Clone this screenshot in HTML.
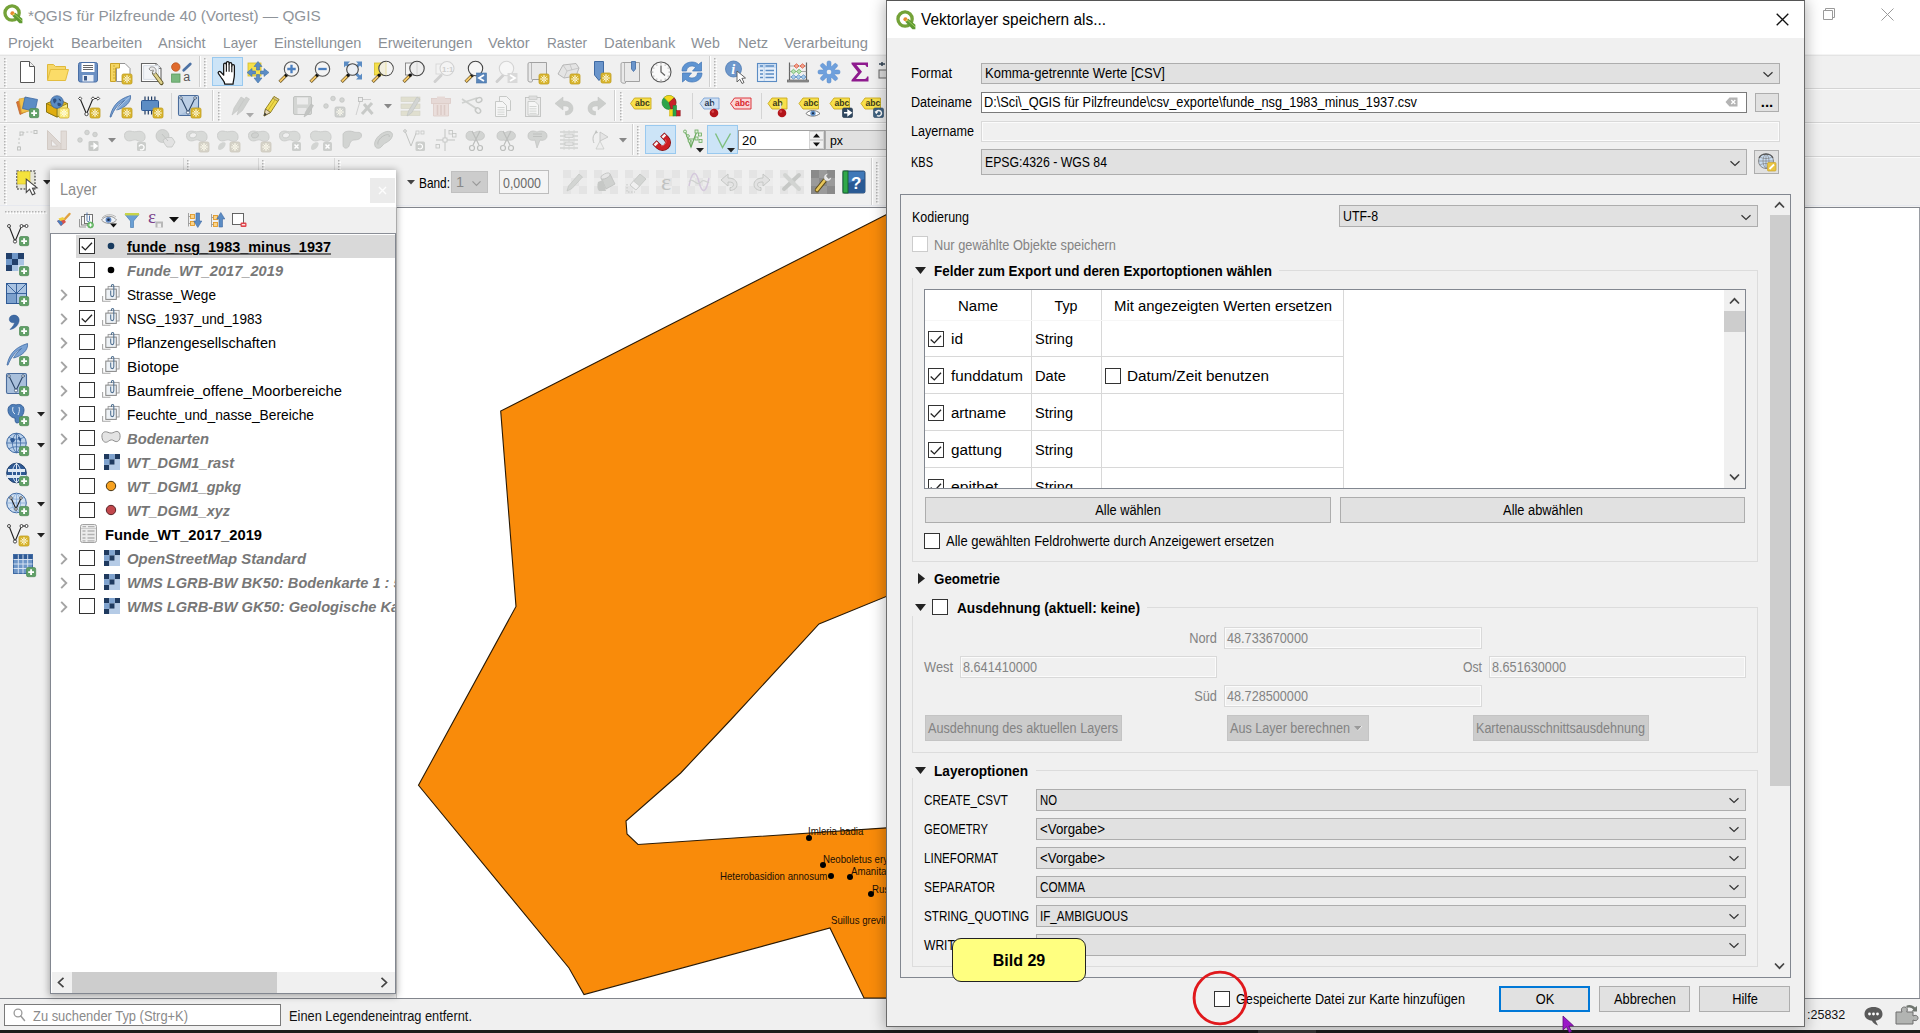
<!DOCTYPE html>
<html lang="de"><head><meta charset="utf-8"><title>QGIS</title>
<style>
*{box-sizing:border-box;margin:0;padding:0}
html,body{width:1920px;height:1033px;overflow:hidden;background:#f0f0f0}
body{position:relative;font-family:"Liberation Sans",sans-serif;font-size:13px;color:#000}
.a{position:absolute}
.t{position:absolute;white-space:pre;line-height:1}
.seg{font-size:15px}
.b{font-weight:bold}
.i{font-style:italic}
.g{color:#838383}
.combo{position:absolute;background:#e1e1e1;border:1px solid #adadad}
.inp{position:absolute;background:#fff;border:1px solid #7a7a7a}
.dinp{position:absolute;background:#f0f0f0;border:1px solid #d9d9d9;box-shadow:inset 0 0 0 1px #fbfbfb}
.btn{position:absolute;background:#e1e1e1;border:1px solid #adadad;text-align:center}
.dbtn{position:absolute;background:#cccccc;border:1px solid #c4c4c4;color:#838383}
.cb{position:absolute;width:16px;height:16px;background:#fff;border:1px solid #333}
.cbd{position:absolute;width:16px;height:16px;background:#fff;border:1px solid #ccc}
.ln{position:absolute;background:#dcdcdc}
svg{position:absolute;overflow:visible}
</style></head>
<body>
<div class="a" style="left:0px;top:0px;width:1920px;height:30px;background:#fff"></div>
<svg style="left:2.5px;top:3.5px" width="19.5" height="19.5" viewBox="0 0 20 20"><circle cx="9.300" cy="9.300" r="7.300" fill="#fff" stroke="#74a238" stroke-width="3.400"/><path d="M9.500 12L12.600 8.900L19.900 15.200V19.800H16.900Z" fill="#5f9a33"/><path d="M11.600 10.200L19.500 17.300" stroke="#a3d05c" stroke-width="0.900" fill="none"/><circle cx="9.700" cy="9.500" r="2.100" fill="#e58a2e"/><circle cx="10.900" cy="10.700" r="0.900" fill="#eed060"/></svg>
<div class="t" style="left:27.8px;top:15px;font-size:15px;transform-origin:0 50%;transform:translateY(-50%) scaleX(1.0206);color:#8f949a;">*QGIS für Pilzfreunde 40 (Vortest) — QGIS</div>
<svg style="left:1822px;top:7px" width="14" height="14" viewBox="0 0 14 14"><path d="M3.5 3.5V1.5H12.5V10.5H10.5M1.5 3.5H10.5V12.5H1.5Z" fill="none" stroke="#9a9a9a" stroke-width="1"/></svg>
<svg style="left:1881px;top:8px" width="13" height="13" viewBox="0 0 13 13"><path d="M0.5 0.5L12.5 12.5M12.5 0.5L0.5 12.5" fill="none" stroke="#9a9a9a" stroke-width="1"/></svg>
<div class="a" style="left:0px;top:30px;width:1920px;height:24px;background:#fff"></div>
<div class="t" style="left:8.3px;top:41.8px;font-size:15px;transform-origin:0 50%;transform:translateY(-50%) scaleX(0.9746);color:#8b9096;">Projekt</div>
<div class="t" style="left:70.5px;top:41.8px;font-size:15px;transform-origin:0 50%;transform:translateY(-50%) scaleX(0.9814);color:#8b9096;">Bearbeiten</div>
<div class="t" style="left:158.3px;top:41.8px;font-size:15px;transform-origin:0 50%;transform:translateY(-50%) scaleX(0.9657);color:#8b9096;">Ansicht</div>
<div class="t" style="left:222.5px;top:41.8px;font-size:15px;transform-origin:0 50%;transform:translateY(-50%) scaleX(0.9141);color:#8b9096;">Layer</div>
<div class="t" style="left:273.5px;top:41.8px;font-size:15px;transform-origin:0 50%;transform:translateY(-50%) scaleX(0.9693);color:#8b9096;">Einstellungen</div>
<div class="t" style="left:377.5px;top:41.8px;font-size:15px;transform-origin:0 50%;transform:translateY(-50%) scaleX(0.9750);color:#8b9096;">Erweiterungen</div>
<div class="t" style="left:488.3px;top:41.8px;font-size:15px;transform-origin:0 50%;transform:translateY(-50%) scaleX(0.9806);color:#8b9096;">Vektor</div>
<div class="t" style="left:546.7px;top:41.8px;font-size:15px;transform-origin:0 50%;transform:translateY(-50%) scaleX(0.9054);color:#8b9096;">Raster</div>
<div class="t" style="left:603.7px;top:41.8px;font-size:15px;transform-origin:0 50%;transform:translateY(-50%) scaleX(0.9828);color:#8b9096;">Datenbank</div>
<div class="t" style="left:691.4px;top:41.8px;font-size:15px;transform-origin:0 50%;transform:translateY(-50%) scaleX(0.9421);color:#8b9096;">Web</div>
<div class="t" style="left:737.5px;top:41.8px;font-size:15px;transform-origin:0 50%;transform:translateY(-50%) scaleX(0.9792);color:#8b9096;">Netz</div>
<div class="t" style="left:784.3px;top:41.8px;font-size:15px;transform-origin:0 50%;transform:translateY(-50%) scaleX(0.9875);color:#8b9096;">Verarbeitung</div>
<div class="a" style="left:0px;top:54px;width:1920px;height:1px;background:#f4f4f4"></div>
<div class="a" style="left:0px;top:55px;width:1920px;height:1px;background:#e4e4e4"></div>
<div class="a" style="left:0px;top:88px;width:1920px;height:1px;background:#d4d4d4"></div>
<div class="a" style="left:0px;top:89px;width:1920px;height:1px;background:#fafafa"></div>
<div class="a" style="left:0px;top:122px;width:1920px;height:1px;background:#d4d4d4"></div>
<div class="a" style="left:0px;top:123px;width:1920px;height:1px;background:#fafafa"></div>
<div class="a" style="left:0px;top:156px;width:1920px;height:1px;background:#d4d4d4"></div>
<div class="a" style="left:0px;top:157px;width:1920px;height:1px;background:#fafafa"></div>
<div class="a" style="left:0px;top:205px;width:1920px;height:1px;background:#e6e8ee"></div>
<svg style="left:4px;top:58px" width="4" height="28"><rect x="0" y="0" width="1.5" height="1.5" fill="#b4b4b4"/><rect x="1.5" y="1.5" width="1.5" height="1.5" fill="#fff"/><rect x="0" y="3" width="1.5" height="1.5" fill="#b4b4b4"/><rect x="1.5" y="4.5" width="1.5" height="1.5" fill="#fff"/><rect x="0" y="6" width="1.5" height="1.5" fill="#b4b4b4"/><rect x="1.5" y="7.5" width="1.5" height="1.5" fill="#fff"/><rect x="0" y="9" width="1.5" height="1.5" fill="#b4b4b4"/><rect x="1.5" y="10.5" width="1.5" height="1.5" fill="#fff"/><rect x="0" y="12" width="1.5" height="1.5" fill="#b4b4b4"/><rect x="1.5" y="13.5" width="1.5" height="1.5" fill="#fff"/><rect x="0" y="15" width="1.5" height="1.5" fill="#b4b4b4"/><rect x="1.5" y="16.5" width="1.5" height="1.5" fill="#fff"/><rect x="0" y="18" width="1.5" height="1.5" fill="#b4b4b4"/><rect x="1.5" y="19.5" width="1.5" height="1.5" fill="#fff"/><rect x="0" y="21" width="1.5" height="1.5" fill="#b4b4b4"/><rect x="1.5" y="22.5" width="1.5" height="1.5" fill="#fff"/><rect x="0" y="24" width="1.5" height="1.5" fill="#b4b4b4"/><rect x="1.5" y="25.5" width="1.5" height="1.5" fill="#fff"/><rect x="0" y="27" width="1.5" height="1.5" fill="#b4b4b4"/><rect x="1.5" y="28.5" width="1.5" height="1.5" fill="#fff"/></svg>
<svg style="left:15.0px;top:60.0px" width="24" height="24" viewBox="0 0 24 24"><path d="M5.500 1.500H14.500L19.500 6.500V22.500H5.500Z" fill="#fff" stroke="#555" stroke-width="1"/><path d="M14.500 1.500V6.500H19.500" fill="#eee" stroke="#555" stroke-width="1"/></svg>
<svg style="left:45.0px;top:60.0px" width="24" height="24" viewBox="0 0 24 24"><path d="M2.5 20V4.5H8.5L10.5 6.5H20.5V9" fill="#f6d768" stroke="#e0b93a" stroke-width="1"/><path d="M2.5 20.5L5.5 9.5H23.5L20.5 20.5Z" fill="#fbdc68" stroke="#e3bd3f" stroke-width="1"/></svg>
<svg style="left:76.0px;top:60.0px" width="24" height="24" viewBox="0 0 24 24"><rect x="2.5" y="2.5" width="19" height="19.5" rx="2" fill="#6a8fc3" stroke="#4a6fa5" stroke-width="1"/><rect x="5.5" y="3" width="13" height="9" fill="#fff"/><path d="M7 5.5H17M7 7.5H17M7 9.5H17" stroke="#555" stroke-width="0.9"/><rect x="6.5" y="15" width="11" height="6.5" fill="#e8eef7"/><rect x="8" y="16" width="3" height="4.5" fill="#3d5a8a"/></svg>
<svg style="left:108.0px;top:60.0px" width="24" height="24" viewBox="0 0 24 24"><path d="M8.5 3.5H17L22 8.5V21.5H8.5Z" fill="#fff" stroke="#888" stroke-width="0.9"/><path d="M2.500 3.5H11.500V8H7.5V21.500H2.500Z" fill="#f5d662" stroke="#c9a227" stroke-width="1"/><path d="M5 6H7M5 9H6.500M5 12H7M5 15H6.500M5 18H7" stroke="#b8962a" stroke-width="0.7"/><rect x="14" y="14" width="10" height="10" rx="1.500" fill="#d9b630" stroke="#bf9c20" stroke-width="0.800"/><path d="M19 15.2V22.8M15.2 19H22.8" stroke="#fffef0" stroke-width="1.150" fill="none"/><path d="M16.4 16.4L21.6 21.6M21.6 16.4L16.4 21.6" stroke="#fffef0" stroke-width="0.900" fill="none"/><circle cx="19" cy="19" r="0.700" fill="#d9b630"/></svg>
<svg style="left:139.0px;top:60.0px" width="24" height="24" viewBox="0 0 24 24"><path d="M2.500 3.500H17L22 8.500V21.500H2.500Z" fill="#fff" stroke="#666" stroke-width="1.100"/><path d="M17 3.500V8.500H22" fill="#f4f4f4" stroke="#666" stroke-width="0.900"/><rect x="4.700" y="5.700" width="15" height="13.600" fill="#f2f4f7" stroke="#cfd6df" stroke-width="0.800"/><path d="M15 13L22.500 23" stroke="#5f5526" stroke-width="4.200" stroke-linecap="round"/><path d="M15.300 13.400L22.300 22.700" stroke="#ded28c" stroke-width="2.600" stroke-linecap="round"/><path d="M11 7.500C13 6.200 16.300 7.200 17 9.800C17.500 11.800 16.500 13.600 14.800 14.300L13.200 12.200C14.300 11.800 14.700 10.900 14.300 10L11.800 10.800L10 9Z" fill="#ececec" stroke="#7d7d7d" stroke-width="0.800"/></svg>
<svg style="left:169.0px;top:60.0px" width="24" height="24" viewBox="0 0 24 24"><circle cx="6.800" cy="7" r="4.200" fill="#e06a2c" stroke="#b9561f" stroke-width="0.800"/><rect x="2.600" y="14" width="8.400" height="8.200" fill="#7ab87e" stroke="#5a9a5e" stroke-width="0.800"/><path d="M14.700 10.200L21.300 3.900" stroke="#4d72a4" stroke-width="2.700" stroke-linecap="round"/><text x="14.300" y="21.200" font-family="Liberation Sans,sans-serif" font-size="12.500" fill="#555">a</text></svg>
<div class="a" style="left:199px;top:56px;width:1px;height:31px;background:#d0d0d0"></div><div class="a" style="left:200px;top:56px;width:1px;height:31px;background:#fff"></div>
<svg style="left:204px;top:58px" width="4" height="28"><rect x="0" y="0" width="1.5" height="1.5" fill="#b4b4b4"/><rect x="1.5" y="1.5" width="1.5" height="1.5" fill="#fff"/><rect x="0" y="3" width="1.5" height="1.5" fill="#b4b4b4"/><rect x="1.5" y="4.5" width="1.5" height="1.5" fill="#fff"/><rect x="0" y="6" width="1.5" height="1.5" fill="#b4b4b4"/><rect x="1.5" y="7.5" width="1.5" height="1.5" fill="#fff"/><rect x="0" y="9" width="1.5" height="1.5" fill="#b4b4b4"/><rect x="1.5" y="10.5" width="1.5" height="1.5" fill="#fff"/><rect x="0" y="12" width="1.5" height="1.5" fill="#b4b4b4"/><rect x="1.5" y="13.5" width="1.5" height="1.5" fill="#fff"/><rect x="0" y="15" width="1.5" height="1.5" fill="#b4b4b4"/><rect x="1.5" y="16.5" width="1.5" height="1.5" fill="#fff"/><rect x="0" y="18" width="1.5" height="1.5" fill="#b4b4b4"/><rect x="1.5" y="19.5" width="1.5" height="1.5" fill="#fff"/><rect x="0" y="21" width="1.5" height="1.5" fill="#b4b4b4"/><rect x="1.5" y="22.5" width="1.5" height="1.5" fill="#fff"/><rect x="0" y="24" width="1.5" height="1.5" fill="#b4b4b4"/><rect x="1.5" y="25.5" width="1.5" height="1.5" fill="#fff"/><rect x="0" y="27" width="1.5" height="1.5" fill="#b4b4b4"/><rect x="1.5" y="28.5" width="1.5" height="1.5" fill="#fff"/></svg>
<div class="a" style="left:212px;top:57px;width:31px;height:29px;background:#cce4f7;border:1px solid #99c9ef"></div>
<svg style="left:216.0px;top:60.0px" width="24" height="24" viewBox="0 0 24 24"><g transform="translate(-1.6 -1.2) scale(1.13)"><path d="M8.200 13.500V5.200C8.200 3.400 10.600 3.400 10.600 5.200V3.800C10.600 2 13 2 13 3.800V4.600C13 2.900 15.400 2.900 15.400 4.600V6.300C15.400 4.800 17.700 4.800 17.700 6.300V14C17.700 18 16.500 19.500 16.500 22.500H9.200C9.200 20.500 7.800 19 6.300 17L3.600 13.200C2.600 11.700 4.400 10.400 5.600 11.700L8.200 14.500Z" fill="#fff" stroke="#111" stroke-width="1.100" stroke-linejoin="round"/><path d="M10.600 5V11.500M13 4.600V11.500M15.400 6.300V11.800" stroke="#111" stroke-width="1" fill="none"/></g></svg>
<svg style="left:246.0px;top:60.0px" width="24" height="24" viewBox="0 0 24 24"><rect x="2" y="3" width="13" height="13" fill="#f5e04a" stroke="#d4bc2a" stroke-width="0.8"/><g fill="#5b8cc4" stroke="#4573a7" stroke-width="0.6"><path d="M12 1.500L16 6.500H13.500V10H10.500V6.500H8Z"/><path d="M12 23L16 18H13.500V14.500H10.500V18H8Z"/><path d="M1 12.500L6 8.500V11H9.500V14H6V16.500Z"/><path d="M23 12.500L18 8.500V11H14.500V14H18V16.500Z"/></g></svg>
<svg style="left:277.0px;top:60.0px" width="24" height="24" viewBox="0 0 24 24"><path d="M2.6 21.8L9.6 14.8" stroke="#5a4a20" stroke-width="3.2" stroke-linecap="butt"/><path d="M2.9 21.5L8 16.4" stroke="#f6c968" stroke-width="2.0" stroke-linecap="butt"/><circle cx="9.3" cy="15.1" r="1.7" fill="#111"/><circle cx="14.5" cy="9" r="7.2" fill="#f4f4f4" stroke="#555" stroke-width="1.1"/><path d="M14.500 4.800V13.200M10.300 9H18.700" stroke="#4b7fc0" stroke-width="2.300"/></svg>
<svg style="left:308.0px;top:60.0px" width="24" height="24" viewBox="0 0 24 24"><path d="M2.6 21.8L9.6 14.8" stroke="#5a4a20" stroke-width="3.2" stroke-linecap="butt"/><path d="M2.9 21.5L8 16.4" stroke="#f6c968" stroke-width="2.0" stroke-linecap="butt"/><circle cx="9.3" cy="15.1" r="1.7" fill="#111"/><circle cx="14.5" cy="9" r="7.2" fill="#f4f4f4" stroke="#555" stroke-width="1.1"/><path d="M10.300 9H18.700" stroke="#4b7fc0" stroke-width="2.300"/></svg>
<svg style="left:339.0px;top:60.0px" width="24" height="24" viewBox="0 0 24 24"><g fill="#5b8cc4"><path d="M5 1.500H11L9 3.500L12 6.500L10 8.500L7 5.500L5 7.500Z"/><path d="M23 1.500H17L19 3.500L16 6.500L18 8.500L21 5.500L23 7.500Z"/><path d="M23 19.500H17L19 17.500L16 14.500L18 12.500L21 15.500L23 13.500Z"/></g><path d="M2.6 21.8L9.6 14.8" stroke="#5a4a20" stroke-width="3.2" stroke-linecap="butt"/><path d="M2.9 21.5L8 16.4" stroke="#f6c968" stroke-width="2.0" stroke-linecap="butt"/><circle cx="9.3" cy="15.1" r="1.7" fill="#111"/><circle cx="13.5" cy="9.5" r="5.8" fill="#eceff3" stroke="#444" stroke-width="1.1"/></svg>
<svg style="left:370.0px;top:60.0px" width="24" height="24" viewBox="0 0 24 24"><rect x="4.500" y="3" width="9" height="12" fill="#f5e04a" stroke="#d4bc2a" stroke-width="0.8"/><path d="M2.6 21.8L9.6 14.8" stroke="#5a4a20" stroke-width="3.2" stroke-linecap="butt"/><path d="M2.9 21.5L8 16.4" stroke="#f6c968" stroke-width="2.0" stroke-linecap="butt"/><circle cx="9.3" cy="15.1" r="1.7" fill="#111"/><circle cx="16" cy="8.5" r="7.2" fill="#f2efdf" stroke="#444" stroke-width="1.1"/><path d="M16 1.800A6.700 6.700 0 0 1 16 15.200Z" fill="#f4f4f4"/><path d="M16 2V15" stroke="#e6d98a" stroke-width="0.8"/></svg>
<svg style="left:401.0px;top:60.0px" width="24" height="24" viewBox="0 0 24 24"><rect x="4.500" y="3" width="9" height="12" fill="#f4f4f4" stroke="#777" stroke-width="0.8"/><path d="M2.6 21.8L9.6 14.8" stroke="#5a4a20" stroke-width="3.2" stroke-linecap="butt"/><path d="M2.9 21.5L8 16.4" stroke="#f6c968" stroke-width="2.0" stroke-linecap="butt"/><circle cx="9.3" cy="15.1" r="1.7" fill="#111"/><circle cx="16" cy="8.5" r="7.2" fill="#eee" stroke="#444" stroke-width="1.1"/><path d="M16 2V15" stroke="#ccc" stroke-width="0.8"/></svg>
<svg style="left:432.0px;top:60.0px" width="24" height="24" viewBox="0 0 24 24"><rect x="4" y="4" width="9" height="10" fill="#f2f2f2" stroke="#d4d4d4" stroke-width="0.8"/><path d="M3 21.500L9 15.500" stroke="#d0d0d0" stroke-width="3" stroke-linecap="round"/><circle cx="15" cy="8.500" r="7" fill="#f4f4f4" stroke="#d2d2d2" stroke-width="1.100"/><text x="10" y="11.500" font-family="Liberation Sans,sans-serif" font-weight="bold" font-size="8" fill="#cfcfcf">1:1</text></svg>
<svg style="left:463.0px;top:60.0px" width="24" height="24" viewBox="0 0 24 24"><path d="M2.6 21.8L9.6 14.8" stroke="#5a4a20" stroke-width="3.2" stroke-linecap="butt"/><path d="M2.9 21.5L8 16.4" stroke="#f6c968" stroke-width="2.0" stroke-linecap="butt"/><circle cx="9.3" cy="15.1" r="1.7" fill="#111"/><circle cx="12.5" cy="8.5" r="7.2" fill="#f6f6f6" stroke="#444" stroke-width="1.1"/><rect x="13.500" y="13" width="10" height="10" fill="#5b86ba" stroke="#4573a7" stroke-width="0.6"/><path d="M21 15L16 18L21 21" stroke="#fff" stroke-width="1.800" fill="none"/></svg>
<svg style="left:494.0px;top:60.0px" width="24" height="24" viewBox="0 0 24 24"><path d="M3 21.500L9 15.500" stroke="#cfcfcf" stroke-width="3" stroke-linecap="round"/><circle cx="12.500" cy="8.500" r="7.200" fill="#f6f6f6" stroke="#d4d4d4" stroke-width="1.100"/><rect x="13.500" y="13" width="10" height="10" fill="#d9d9d9"/><path d="M16 15L21 18L16 21" stroke="#fff" stroke-width="1.800" fill="none"/></svg>
<svg style="left:525.0px;top:60.0px" width="24" height="24" viewBox="0 0 24 24"><path d="M4.500 2.500H21.500V19.500H7.500V21C7.500 22.500 3 22.500 3 20.500V4C3 2.500 4.500 2.500 4.500 2.500Z" fill="#e9e9e9" stroke="#999" stroke-width="0.9"/><path d="M6.500 3V19.500" stroke="#aaa" stroke-width="0.8"/><rect x="14" y="14" width="10" height="10" rx="1.500" fill="#d9b630" stroke="#bf9c20" stroke-width="0.800"/><path d="M19 15.2V22.8M15.2 19H22.8" stroke="#fffef0" stroke-width="1.150" fill="none"/><path d="M16.4 16.4L21.6 21.6M21.6 16.4L16.4 21.6" stroke="#fffef0" stroke-width="0.900" fill="none"/><circle cx="19" cy="19" r="0.700" fill="#d9b630"/></svg>
<svg style="left:556.0px;top:60.0px" width="24" height="24" viewBox="0 0 24 24"><path d="M2 14L7 5L20 3.500L23 8L20 16L8 18Z" fill="#e4e4e4" stroke="#aaa" stroke-width="0.8"/><path d="M7 5L11 11L8 18M11 11L23 8M14 4.500L16 10" stroke="#bbb" stroke-width="0.7" fill="none"/><rect x="14" y="14" width="10" height="10" rx="1.500" fill="#d9b630" stroke="#bf9c20" stroke-width="0.800"/><path d="M19 15.2V22.8M15.2 19H22.8" stroke="#fffef0" stroke-width="1.150" fill="none"/><path d="M16.4 16.4L21.6 21.6M21.6 16.4L16.4 21.6" stroke="#fffef0" stroke-width="0.900" fill="none"/><circle cx="19" cy="19" r="0.700" fill="#d9b630"/></svg>
<svg style="left:589.0px;top:60.0px" width="24" height="24" viewBox="0 0 24 24"><path d="M5.500 1.500H14.500V15L10 20.500L5.500 15Z" fill="#6a95cb" stroke="#3f6aa3" stroke-width="1"/><rect x="12" y="13" width="10" height="10" rx="1.500" fill="#d9b630" stroke="#bf9c20" stroke-width="0.800"/><path d="M17 14.2V21.8M13.2 18H20.8" stroke="#fffef0" stroke-width="1.150" fill="none"/><path d="M14.4 15.4L19.6 20.6M19.6 15.4L14.4 20.6" stroke="#fffef0" stroke-width="0.900" fill="none"/><circle cx="17" cy="18" r="0.700" fill="#d9b630"/></svg>
<svg style="left:618.0px;top:60.0px" width="24" height="24" viewBox="0 0 24 24"><path d="M4.500 2.500H21.500V21.500H7.500V23C7.500 23.500 3 23.500 3 21.500V4C3 2.500 4.500 2.500 4.500 2.500Z" fill="#e9e9e9" stroke="#999" stroke-width="0.9"/><path d="M6.500 3V21.500" stroke="#aaa" stroke-width="0.8"/><path d="M13.500 1.500H17.500V9L15.500 11.500L13.500 9Z" fill="#6a95cb" stroke="#3f6aa3" stroke-width="0.8"/></svg>
<svg style="left:649.0px;top:60.0px" width="24" height="24" viewBox="0 0 24 24"><circle cx="12" cy="12" r="10" fill="#fafafa" stroke="#555" stroke-width="1.100"/><path d="M12 5.500V12L16 15.500" stroke="#666" stroke-width="1.300" fill="none"/><g fill="#777"><circle cx="12" cy="3.800" r=".6"/><circle cx="12" cy="20.200" r=".6"/><circle cx="3.800" cy="12" r=".6"/><circle cx="20.200" cy="12" r=".6"/><circle cx="7.900" cy="4.900" r=".5"/><circle cx="16.100" cy="4.900" r=".5"/><circle cx="4.900" cy="7.900" r=".5"/><circle cx="19.100" cy="7.900" r=".5"/><circle cx="4.900" cy="16.100" r=".5"/><circle cx="19.100" cy="16.100" r=".5"/><circle cx="7.900" cy="19.100" r=".5"/><circle cx="16.100" cy="19.100" r=".5"/></g></svg>
<svg style="left:680.0px;top:60.0px" width="24" height="24" viewBox="0 0 24 24"><path d="M2 11C2 5 7 2 12 2C15.500 2 17.500 3.500 18.500 4.500L21.500 2V11H12.500L15.500 7.500C14.500 6.500 13.500 6 12 6C9 6 6.500 8 6.500 11Z" fill="#5e94d2" stroke="#3f74b5" stroke-width="0.7"/><path d="M22 13C22 19 17 22 12 22C8.500 22 6.500 20.500 5.500 19.500L2.500 22V13H11.500L8.500 16.500C9.500 17.500 10.500 18 12 18C15 18 17.500 16 17.500 13Z" fill="#5e94d2" stroke="#3f74b5" stroke-width="0.7"/></svg>
<div class="a" style="left:709px;top:56px;width:1px;height:31px;background:#d0d0d0"></div><div class="a" style="left:710px;top:56px;width:1px;height:31px;background:#fff"></div>
<svg style="left:714px;top:58px" width="4" height="28"><rect x="0" y="0" width="1.5" height="1.5" fill="#b4b4b4"/><rect x="1.5" y="1.5" width="1.5" height="1.5" fill="#fff"/><rect x="0" y="3" width="1.5" height="1.5" fill="#b4b4b4"/><rect x="1.5" y="4.5" width="1.5" height="1.5" fill="#fff"/><rect x="0" y="6" width="1.5" height="1.5" fill="#b4b4b4"/><rect x="1.5" y="7.5" width="1.5" height="1.5" fill="#fff"/><rect x="0" y="9" width="1.5" height="1.5" fill="#b4b4b4"/><rect x="1.5" y="10.5" width="1.5" height="1.5" fill="#fff"/><rect x="0" y="12" width="1.5" height="1.5" fill="#b4b4b4"/><rect x="1.5" y="13.5" width="1.5" height="1.5" fill="#fff"/><rect x="0" y="15" width="1.5" height="1.5" fill="#b4b4b4"/><rect x="1.5" y="16.5" width="1.5" height="1.5" fill="#fff"/><rect x="0" y="18" width="1.5" height="1.5" fill="#b4b4b4"/><rect x="1.5" y="19.5" width="1.5" height="1.5" fill="#fff"/><rect x="0" y="21" width="1.5" height="1.5" fill="#b4b4b4"/><rect x="1.5" y="22.5" width="1.5" height="1.5" fill="#fff"/><rect x="0" y="24" width="1.5" height="1.5" fill="#b4b4b4"/><rect x="1.5" y="25.5" width="1.5" height="1.5" fill="#fff"/><rect x="0" y="27" width="1.5" height="1.5" fill="#b4b4b4"/><rect x="1.5" y="28.5" width="1.5" height="1.5" fill="#fff"/></svg>
<svg style="left:724.0px;top:60.0px" width="24" height="24" viewBox="0 0 24 24"><circle cx="9.500" cy="9" r="8" fill="#6e98cc" stroke="#4f7cb4" stroke-width="0.8"/><text x="7.200" y="14" font-family="Liberation Serif,serif" font-style="italic" font-weight="bold" font-size="14" fill="#fff">i</text><path d="M13 11L13 22L15.800 19.300L18 23.500L20 22.500L17.900 18.400L21.500 18Z" fill="#fff" stroke="#555" stroke-width="0.9"/></svg>
<svg style="left:755.0px;top:60.0px" width="24" height="24" viewBox="0 0 24 24"><rect x="2.500" y="3.500" width="19" height="18" fill="#e8f0fa" stroke="#5b8cc4" stroke-width="1.100"/><rect x="3" y="4" width="18" height="4" fill="#c9dcf2"/><path d="M5 6H8M10.500 6H19M5 10.500H8M10.500 10.500H19M5 14H8M10.500 14H19M5 17.500H8M10.500 17.500H19" stroke="#5b8cc4" stroke-width="1.500"/><path d="M9.200 4V21" stroke="#a9c5e6" stroke-width="0.7"/></svg>
<svg style="left:786.0px;top:60.0px" width="24" height="24" viewBox="0 0 24 24"><path d="M3.500 2.500V20M20.500 2.500V20" stroke="#666" stroke-width="1.200"/><path d="M3.500 6H20.500M3.500 11.500H20.500M3.500 17H20.500" stroke="#888" stroke-width="0.7"/><rect x="1.500" y="20" width="21" height="2" fill="#999" stroke="#555" stroke-width="0.600"/><g stroke-width="0.8"><path d="M8 6L10.500 3.800L13 6L10.500 8.200Z" fill="#f4a58f" stroke="#d9533a"/><path d="M14 6L16.500 3.800L19 6L16.500 8.200Z" fill="#f4a58f" stroke="#d9533a"/><path d="M5 11.500L7.500 9.300L10 11.500L7.500 13.700Z" fill="#b9e2b5" stroke="#6bb465"/><path d="M10.500 11.500L13 9.300L15.500 11.500L13 13.700Z" fill="#b9e2b5" stroke="#6bb465"/><path d="M5 17L7.500 14.800L10 17L7.500 19.200Z" fill="#a9cdea" stroke="#5b8cc4"/><path d="M10 17L12.500 14.800L15 17L12.500 19.200Z" fill="#a9cdea" stroke="#5b8cc4"/><path d="M15 17L17.500 14.800L20 17L17.500 19.200Z" fill="#a9cdea" stroke="#5b8cc4"/></g></svg>
<svg style="left:817.0px;top:60.0px" width="24" height="24" viewBox="0 0 24 24"><g transform="translate(12 12)"><g fill="#6fa0dc" stroke="#5588c8" stroke-width="0.5"><rect x="-2" y="-11" width="4" height="7" rx="1.600" transform="rotate(0)"/><rect x="-2" y="-11" width="4" height="7" rx="1.600" transform="rotate(45)"/><rect x="-2" y="-11" width="4" height="7" rx="1.600" transform="rotate(90)"/><rect x="-2" y="-11" width="4" height="7" rx="1.600" transform="rotate(135)"/><rect x="-2" y="-11" width="4" height="7" rx="1.600" transform="rotate(180)"/><rect x="-2" y="-11" width="4" height="7" rx="1.600" transform="rotate(225)"/><rect x="-2" y="-11" width="4" height="7" rx="1.600" transform="rotate(270)"/><rect x="-2" y="-11" width="4" height="7" rx="1.600" transform="rotate(315)"/></g><circle r="6.300" fill="#6fa0dc"/><circle r="2.300" fill="#f0f0f0"/></g></svg>
<svg style="left:848.0px;top:60.0px" width="24" height="24" viewBox="0 0 24 24"><path d="M3.500 2.500H20V7H18.500C18.300 5.500 17.500 5 16 5H8.500L14 11.800L8 19H16.500C18 19 18.800 18 19 16.500H20.500V21.500H3.500V20L10 12.200L3.500 4Z" fill="#8e1b8e"/></svg>
<svg style="left:877.0px;top:60.0px" width="24" height="24" viewBox="0 0 24 24"><rect x="2" y="10" width="20" height="8" fill="#ddd" stroke="#666" stroke-width="1"/><path d="M2 4H8M5 2V6" stroke="#345" stroke-width="1.500"/></svg>
<svg style="left:4px;top:92px" width="4" height="28"><rect x="0" y="0" width="1.5" height="1.5" fill="#b4b4b4"/><rect x="1.5" y="1.5" width="1.5" height="1.5" fill="#fff"/><rect x="0" y="3" width="1.5" height="1.5" fill="#b4b4b4"/><rect x="1.5" y="4.5" width="1.5" height="1.5" fill="#fff"/><rect x="0" y="6" width="1.5" height="1.5" fill="#b4b4b4"/><rect x="1.5" y="7.5" width="1.5" height="1.5" fill="#fff"/><rect x="0" y="9" width="1.5" height="1.5" fill="#b4b4b4"/><rect x="1.5" y="10.5" width="1.5" height="1.5" fill="#fff"/><rect x="0" y="12" width="1.5" height="1.5" fill="#b4b4b4"/><rect x="1.5" y="13.5" width="1.5" height="1.5" fill="#fff"/><rect x="0" y="15" width="1.5" height="1.5" fill="#b4b4b4"/><rect x="1.5" y="16.5" width="1.5" height="1.5" fill="#fff"/><rect x="0" y="18" width="1.5" height="1.5" fill="#b4b4b4"/><rect x="1.5" y="19.5" width="1.5" height="1.5" fill="#fff"/><rect x="0" y="21" width="1.5" height="1.5" fill="#b4b4b4"/><rect x="1.5" y="22.5" width="1.5" height="1.5" fill="#fff"/><rect x="0" y="24" width="1.5" height="1.5" fill="#b4b4b4"/><rect x="1.5" y="25.5" width="1.5" height="1.5" fill="#fff"/><rect x="0" y="27" width="1.5" height="1.5" fill="#b4b4b4"/><rect x="1.5" y="28.5" width="1.5" height="1.5" fill="#fff"/></svg>
<svg style="left:15.0px;top:94.0px" width="24" height="24" viewBox="0 0 24 24"><path d="M1.500 8L9 5L12.500 17L5 20.500Z" fill="#d97834" stroke="#b85f22" stroke-width="0.7"/><path d="M4 5L12.500 3.500L14.500 17L6.500 19Z" fill="#f2c14a" stroke="#d3a12f" stroke-width="0.7"/><path d="M10 3L22.500 5.500L20 17.500L7.500 14.500Z" fill="#5b8cc4" stroke="#3f6aa3" stroke-width="0.8"/><rect x="14.5" y="14.5" width="9.2" height="9.2" rx="1.500" fill="#5f9f66" stroke="#4f8a56" stroke-width="0.700"/><path d="M19.1 16.2V22.0M16.2 19.1H22.0" stroke="#fff" stroke-width="1.900" fill="none"/></svg>
<svg style="left:45.0px;top:94.0px" width="24" height="24" viewBox="0 0 24 24"><path d="M1.500 9.500L12 5L22.500 9.500V18L12 23L1.500 18Z" fill="#e6b817" stroke="#7d6a10" stroke-width="0.9"/><path d="M12 14.500L22.500 9.500V18L12 23Z" fill="#f9ea7a" stroke="#7d6a10" stroke-width="0.7"/><path d="M1.500 9.500L12 14.500V23L1.500 18Z" fill="#e0ad10" stroke="#7d6a10" stroke-width="0.7"/><circle cx="12" cy="8" r="6.300" fill="#5b8cc4" stroke="#3a5f94" stroke-width="0.7"/><path d="M8 5.500C9.500 4 11 4.500 11.500 6C12 7.500 10 8 10 9.500C9 9.500 8 8 8 5.500ZM13.500 4.500C15 4.500 16.500 6 16 7.500C15 7 14 6.500 13.500 4.500ZM12.500 9C14 8.500 16 9.500 16.500 10.500C15.500 12.500 13.500 13 12.500 11Z" fill="#2f4f7f"/><rect x="14" y="14" width="10" height="10" rx="1.500" fill="#f9ea7a" stroke="#c8a52c" stroke-width="0.800"/><path d="M19 15.2V22.8M15.2 19H22.8" stroke="#fffef0" stroke-width="1.150" fill="none"/><path d="M16.4 16.4L21.6 21.6M21.6 16.4L16.4 21.6" stroke="#fffef0" stroke-width="0.900" fill="none"/><circle cx="19" cy="19" r="0.700" fill="#f9ea7a"/></svg>
<svg style="left:76.0px;top:94.0px" width="24" height="24" viewBox="0 0 24 24"><path d="M4 4.500L10.500 20L17 4.500L21 4.500" fill="none" stroke="#222" stroke-width="1.100"/><path d="M2.500 4.500L4.200 2.800L5.900 4.500L4.200 6.200Z" fill="#fff" stroke="#222" stroke-width="0.8"/><path d="M15.300 4.500L17 2.800L18.700 4.500L17 6.200Z" fill="#fff" stroke="#222" stroke-width="0.8"/><path d="M20.300 4.500L22 2.800L23.700 4.500L22 6.200Z" fill="#fff" stroke="#222" stroke-width="0.8"/><circle cx="10.500" cy="20" r="1.700" fill="#fff" stroke="#222" stroke-width="0.8"/><rect x="14" y="14" width="10" height="10" rx="1.500" fill="#d9b630" stroke="#bf9c20" stroke-width="0.800"/><path d="M19 15.2V22.8M15.2 19H22.8" stroke="#fffef0" stroke-width="1.150" fill="none"/><path d="M16.4 16.4L21.6 21.6M21.6 16.4L16.4 21.6" stroke="#fffef0" stroke-width="0.900" fill="none"/><circle cx="19" cy="19" r="0.700" fill="#d9b630"/></svg>
<svg style="left:108.0px;top:94.0px" width="24" height="24" viewBox="0 0 24 24"><path d="M2 23C4 14 8 6 22.500 1.500C23.500 8 17 14 8.500 16C10 13 13 9.500 16.500 6.500C11 9 6 15 3 23Z" fill="#7ba3d4" stroke="#3f6aa3" stroke-width="0.8"/><path d="M8.500 16C12 12 16 8 21.500 3" stroke="#c8dcf0" stroke-width="0.700" fill="none"/><rect x="14" y="14" width="10" height="10" rx="1.500" fill="#d9b630" stroke="#bf9c20" stroke-width="0.800"/><path d="M19 15.2V22.8M15.2 19H22.8" stroke="#fffef0" stroke-width="1.150" fill="none"/><path d="M16.4 16.4L21.6 21.6M21.6 16.4L16.4 21.6" stroke="#fffef0" stroke-width="0.900" fill="none"/><circle cx="19" cy="19" r="0.700" fill="#d9b630"/></svg>
<svg style="left:139.0px;top:94.0px" width="24" height="24" viewBox="0 0 24 24"><path d="M6 2.500V7M9.300 2.500V7M12.600 2.500V7M15.900 2.500V7M6 16V20.500M9.300 16V20.500M12.600 16V20.500M15.900 16V20.500" stroke="#1f3b63" stroke-width="1.200"/><rect x="2.500" y="6.500" width="17" height="10" rx="1" fill="#5b8cc4" stroke="#2f5a95" stroke-width="1"/><rect x="14" y="14" width="10" height="10" rx="1.500" fill="#d9b630" stroke="#bf9c20" stroke-width="0.800"/><path d="M19 15.2V22.8M15.2 19H22.8" stroke="#fffef0" stroke-width="1.150" fill="none"/><path d="M16.4 16.4L21.6 21.6M21.6 16.4L16.4 21.6" stroke="#fffef0" stroke-width="0.900" fill="none"/><circle cx="19" cy="19" r="0.700" fill="#d9b630"/></svg>
<div class="a" style="left:171px;top:93px;width:1px;height:26px;background:#d4d4d4"></div>
<svg style="left:177.0px;top:94.0px" width="24" height="24" viewBox="0 0 24 24"><rect x="1.500" y="1.500" width="20" height="20" rx="1.500" fill="#a9c0dc" stroke="#4a6c9c" stroke-width="1.100"/><path d="M2 2H21V12L2 21Z" fill="#c3d4e8" opacity="0.7"/><path d="M4 4L11 18.500L18 4H20" fill="none" stroke="#2a4466" stroke-width="1.100"/><circle cx="4" cy="4" r="1.300" fill="#fff" stroke="#2a4466" stroke-width="0.7"/><circle cx="18" cy="4" r="1.300" fill="#fff" stroke="#2a4466" stroke-width="0.7"/><circle cx="11" cy="18.500" r="1.600" fill="#fff" stroke="#2a4466" stroke-width="0.7"/><rect x="14" y="14" width="10" height="10" rx="1.500" fill="#d9b630" stroke="#bf9c20" stroke-width="0.800"/><path d="M19 15.2V22.8M15.2 19H22.8" stroke="#fffef0" stroke-width="1.150" fill="none"/><path d="M16.4 16.4L21.6 21.6M21.6 16.4L16.4 21.6" stroke="#fffef0" stroke-width="0.900" fill="none"/><circle cx="19" cy="19" r="0.700" fill="#d9b630"/></svg>
<div class="a" style="left:212px;top:90px;width:1px;height:31px;background:#d0d0d0"></div><div class="a" style="left:213px;top:90px;width:1px;height:31px;background:#fff"></div>
<svg style="left:218px;top:92px" width="4" height="28"><rect x="0" y="0" width="1.5" height="1.5" fill="#b4b4b4"/><rect x="1.5" y="1.5" width="1.5" height="1.5" fill="#fff"/><rect x="0" y="3" width="1.5" height="1.5" fill="#b4b4b4"/><rect x="1.5" y="4.5" width="1.5" height="1.5" fill="#fff"/><rect x="0" y="6" width="1.5" height="1.5" fill="#b4b4b4"/><rect x="1.5" y="7.5" width="1.5" height="1.5" fill="#fff"/><rect x="0" y="9" width="1.5" height="1.5" fill="#b4b4b4"/><rect x="1.5" y="10.5" width="1.5" height="1.5" fill="#fff"/><rect x="0" y="12" width="1.5" height="1.5" fill="#b4b4b4"/><rect x="1.5" y="13.5" width="1.5" height="1.5" fill="#fff"/><rect x="0" y="15" width="1.5" height="1.5" fill="#b4b4b4"/><rect x="1.5" y="16.5" width="1.5" height="1.5" fill="#fff"/><rect x="0" y="18" width="1.5" height="1.5" fill="#b4b4b4"/><rect x="1.5" y="19.5" width="1.5" height="1.5" fill="#fff"/><rect x="0" y="21" width="1.5" height="1.5" fill="#b4b4b4"/><rect x="1.5" y="22.5" width="1.5" height="1.5" fill="#fff"/><rect x="0" y="24" width="1.5" height="1.5" fill="#b4b4b4"/><rect x="1.5" y="25.5" width="1.5" height="1.5" fill="#fff"/><rect x="0" y="27" width="1.5" height="1.5" fill="#b4b4b4"/><rect x="1.5" y="28.5" width="1.5" height="1.5" fill="#fff"/></svg>
<svg style="left:229.0px;top:94.0px" width="24" height="24" viewBox="0 0 24 24"><g fill="#cfd1cf" stroke="#c2c4c2" stroke-width="0.6"><path d="M3 21L5 14L12 3L15.500 5L8.500 16.500Z"/><path d="M8 21L10 14L17 3L20.500 5L13.500 16.500Z"/></g></svg>
<svg style="left:260.0px;top:94.0px" width="24" height="24" viewBox="0 0 24 24"><path d="M4 22L5.500 15L14 2.500L19 5.500L10.500 18.500Z" fill="#f0da4a" stroke="#8a7a1a" stroke-width="0.9"/><path d="M7.800 16.800L16.300 4" stroke="#c9b32a" stroke-width="1"/><path d="M4 22L5.500 15L10.500 18.500Z" fill="#e8d9b8" stroke="#6b5f3a" stroke-width="0.8"/><path d="M4 22L4.700 18.800L6.800 20.200Z" fill="#333"/><path d="M14 2.500L19 5.500L17.800 7.300L12.800 4.300Z" fill="#d4c28a" stroke="#8a7a1a" stroke-width="0.6"/></svg>
<svg style="left:291.0px;top:94.0px" width="24" height="24" viewBox="0 0 24 24"><rect x="2.500" y="2.500" width="18" height="18" rx="1.500" fill="#d3d5d3" stroke="#c2c4c2"/><rect x="6" y="3.500" width="11" height="7" fill="#ececec"/><rect x="6.500" y="14" width="9" height="6" fill="#e8e8e8"/><path d="M13 23L14.500 18L20 10L22.500 11.500L17.500 20Z" fill="#c2c4c2" stroke="#babcba" stroke-width="0.6"/></svg>
<svg style="left:322.0px;top:94.0px" width="24" height="24" viewBox="0 0 24 24"><g fill="#d3d5d3" stroke="#c0c2c0" stroke-width="0.7"><circle cx="11" cy="4.500" r="2.300"/><circle cx="20" cy="6" r="2.300"/><circle cx="4" cy="12" r="2.300"/></g><rect x="13" y="13" width="10" height="10" rx="1.500" fill="#cfd1cf" stroke="#c2c4c2" stroke-width="0.800"/><path d="M18 14.2V21.8M14.2 18H21.8" stroke="#fffef0" stroke-width="1.150" fill="none"/><path d="M15.4 15.4L20.6 20.6M20.6 15.4L15.4 20.6" stroke="#fffef0" stroke-width="0.900" fill="none"/><circle cx="18" cy="18" r="0.700" fill="#cfd1cf"/></svg>
<svg style="left:353.0px;top:94.0px" width="24" height="24" viewBox="0 0 24 24"><path d="M3 21L7.500 5.500H18" fill="none" stroke="#ccc" stroke-width="0.9"/><rect x="5.500" y="3.500" width="4" height="4" fill="#eee" stroke="#b8bab8" stroke-width="0.8"/><path d="M9 20L19 9M11 10L19.500 20" stroke="#c8cac8" stroke-width="3"/></svg>
<svg style="left:399.0px;top:94.0px" width="24" height="24" viewBox="0 0 24 24"><rect x="2" y="3" width="19" height="4.600" fill="#e0dfcf" stroke="#d2d2c6" stroke-width="0.6"/><rect x="2" y="10" width="19" height="4.600" fill="#e0dfcf" stroke="#d2d2c6" stroke-width="0.6"/><rect x="2" y="17" width="19" height="4.600" fill="#e0dfcf" stroke="#d2d2c6" stroke-width="0.6"/><path d="M8 22L9.500 17L18 3L21 5L12.500 19Z" fill="#d3d5d3" stroke="#c2c4c2" stroke-width="0.7"/></svg>
<svg style="left:429.0px;top:94.0px" width="24" height="24" viewBox="0 0 24 24"><rect x="2.500" y="4.500" width="19" height="5" fill="#e6d9d6" stroke="#dccbc7" stroke-width="0.8"/><rect x="8" y="2.500" width="8" height="2.500" fill="#e6d9d6"/><path d="M4.500 9.500H19.500V22H4.500Z" fill="#eadedb" stroke="#dccbc7" stroke-width="0.8"/><path d="M8.500 11V21M12 11V21M15.500 11V21" stroke="#dccbc7" stroke-width="1.600"/></svg>
<svg style="left:460.0px;top:94.0px" width="24" height="24" viewBox="0 0 24 24"><path d="M2 5L17 15M2 9L17 4" stroke="#cfd1cf" stroke-width="1.800"/><ellipse cx="19" cy="6" rx="3" ry="2.300" fill="none" stroke="#c6c8c6" stroke-width="1.400" transform="rotate(-25 19 6)"/><ellipse cx="18" cy="16.500" rx="2.300" ry="3" fill="none" stroke="#c6c8c6" stroke-width="1.400" transform="rotate(-40 18 16.500)"/></svg>
<svg style="left:491.0px;top:94.0px" width="24" height="24" viewBox="0 0 24 24"><path d="M8.500 2.500H15.500L19.500 6.500V16.500H8.500Z" fill="#f4f4f4" stroke="#c2c4c2" stroke-width="0.9"/><path d="M4.500 7.500H11.500L15.500 11.500V22.500H4.500Z" fill="#f6f6f6" stroke="#c2c4c2" stroke-width="0.9"/><path d="M6.500 13.500H13.500M6.500 15.800H13.500M6.500 18.100H13.500M6.500 20.400H13.500" stroke="#cccecc" stroke-width="0.8"/></svg>
<svg style="left:522.0px;top:94.0px" width="24" height="24" viewBox="0 0 24 24"><rect x="3.500" y="3.500" width="15" height="19" fill="#ececec" stroke="#c0c2c0" stroke-width="0.9"/><rect x="7" y="2" width="8" height="3.500" fill="#dedede" stroke="#c0c2c0" stroke-width="0.6"/><path d="M6 7.500H13L16.500 11V21H6Z" fill="#f6f6f6" stroke="#c2c4c2" stroke-width="0.8"/><path d="M7.500 12.500H14.500M7.500 14.800H14.500M7.500 17.100H14.500M7.500 19.400H14.500" stroke="#cccecc" stroke-width="0.8"/></svg>
<svg style="left:553.0px;top:94.0px" width="24" height="24" viewBox="0 0 24 24"><path d="M2 9.500L10 3V7C17 7 20 10.500 20 14.500C20 18.500 16.500 21 12.500 21V17.500C14.500 17.500 16 16.500 16 14.500C16 12.500 14 12 10 12V16Z" fill="#cccecc" stroke="#c0c2c0" stroke-width="0.5"/></svg>
<svg style="left:584.0px;top:94.0px" width="24" height="24" viewBox="0 0 24 24"><path d="M22 9.500L14 3V7C7 7 4 10.500 4 14.500C4 18.500 7.500 21 11.500 21V17.500C9.500 17.500 8 16.500 8 14.500C8 12.500 10 12 14 12V16Z" fill="#cccecc" stroke="#c0c2c0" stroke-width="0.5"/></svg>
<svg style="left:246px;top:113px" width="8" height="5" viewBox="0 0 8 5"><path d="M0 0H8L4 4.5Z" fill="#aaa"/></svg>
<svg style="left:384px;top:104px" width="8" height="5" viewBox="0 0 8 5"><path d="M0 0H8L4 4.5Z" fill="#888"/></svg>
<div class="a" style="left:614px;top:90px;width:1px;height:31px;background:#d0d0d0"></div><div class="a" style="left:615px;top:90px;width:1px;height:31px;background:#fff"></div>
<svg style="left:620px;top:92px" width="4" height="28"><rect x="0" y="0" width="1.5" height="1.5" fill="#b4b4b4"/><rect x="1.5" y="1.5" width="1.5" height="1.5" fill="#fff"/><rect x="0" y="3" width="1.5" height="1.5" fill="#b4b4b4"/><rect x="1.5" y="4.5" width="1.5" height="1.5" fill="#fff"/><rect x="0" y="6" width="1.5" height="1.5" fill="#b4b4b4"/><rect x="1.5" y="7.5" width="1.5" height="1.5" fill="#fff"/><rect x="0" y="9" width="1.5" height="1.5" fill="#b4b4b4"/><rect x="1.5" y="10.5" width="1.5" height="1.5" fill="#fff"/><rect x="0" y="12" width="1.5" height="1.5" fill="#b4b4b4"/><rect x="1.5" y="13.5" width="1.5" height="1.5" fill="#fff"/><rect x="0" y="15" width="1.5" height="1.5" fill="#b4b4b4"/><rect x="1.5" y="16.5" width="1.5" height="1.5" fill="#fff"/><rect x="0" y="18" width="1.5" height="1.5" fill="#b4b4b4"/><rect x="1.5" y="19.5" width="1.5" height="1.5" fill="#fff"/><rect x="0" y="21" width="1.5" height="1.5" fill="#b4b4b4"/><rect x="1.5" y="22.5" width="1.5" height="1.5" fill="#fff"/><rect x="0" y="24" width="1.5" height="1.5" fill="#b4b4b4"/><rect x="1.5" y="25.5" width="1.5" height="1.5" fill="#fff"/><rect x="0" y="27" width="1.5" height="1.5" fill="#b4b4b4"/><rect x="1.5" y="28.5" width="1.5" height="1.5" fill="#fff"/></svg>
<svg style="left:629.0px;top:94.0px" width="24" height="24" viewBox="0 0 24 24"><path d="M1.5 9.5L5.5 4H22.0V15H5.5Z" fill="#f8e04a" stroke="#c9a91f" stroke-width="0.9"/><text x="6.0" y="12.4" font-family="Liberation Sans,sans-serif" font-weight="bold" font-size="8.6" fill="#3a3a1a">abc</text></svg>
<svg style="left:660.0px;top:94.0px" width="24" height="24" viewBox="0 0 24 24"><circle cx="9" cy="8.500" r="7" fill="#2ca44a" stroke="#1f7d37" stroke-width="0.6"/><path d="M9 8.500L4 3.600A7 7 0 0 1 14.200 3.800Z" fill="#f4d81c" stroke="#c9ad10" stroke-width="0.5"/><path d="M9 8.500L14.200 3.800A7 7 0 0 1 11 15.200Z" fill="#c8202a" stroke="#8f141c" stroke-width="0.5"/><rect x="9.500" y="15.500" width="4" height="6.500" fill="#f4d81c" stroke="#c9ad10" stroke-width="0.5"/><rect x="13" y="11.500" width="3.600" height="10.500" fill="#2ca44a" stroke="#1f7d37" stroke-width="0.5"/><rect x="16.600" y="16.500" width="3.600" height="5.500" fill="#c8202a" stroke="#8f141c" stroke-width="0.5"/></svg>
<svg style="left:699.0px;top:94.0px" width="24" height="24" viewBox="0 0 24 24"><path d="M1 9.5L5 4H20V15H5Z" fill="#cfe0f4" stroke="#7ba3d4" stroke-width="0.9"/><text x="5.5" y="12.4" font-family="Liberation Sans,sans-serif" font-weight="bold" font-size="8.6" fill="#2a3a52">ab</text><path d="M13.5 9V17" stroke="#ddd" stroke-width="1.6"/><circle cx="15" cy="19" r="4.3" fill="#b3151b"/><circle cx="13.8" cy="17.6" r="1.3" fill="#d9484d"/></svg>
<svg style="left:729.0px;top:94.0px" width="24" height="24" viewBox="0 0 24 24"><path d="M1.5 9.5L5.5 4H22.0V15H5.5Z" fill="#fbd5d5" stroke="#d8242a" stroke-width="0.9"/><text x="6.0" y="12.4" font-family="Liberation Sans,sans-serif" font-weight="bold" font-size="8.6" fill="#d8242a">abc</text></svg>
<svg style="left:767.0px;top:94.0px" width="24" height="24" viewBox="0 0 24 24"><path d="M1 9.5L5 4H20V15H5Z" fill="#f8e04a" stroke="#c9a91f" stroke-width="0.9"/><text x="5.5" y="12.4" font-family="Liberation Sans,sans-serif" font-weight="bold" font-size="8.6" fill="#3a3a1a">ab</text><path d="M13.5 9V17" stroke="#ddd" stroke-width="1.6"/><circle cx="15" cy="19" r="4.3" fill="#b3151b"/><circle cx="13.8" cy="17.6" r="1.3" fill="#d9484d"/></svg>
<svg style="left:798.0px;top:94.0px" width="24" height="24" viewBox="0 0 24 24"><path d="M1 9.5L5 4H20.5V15H5Z" fill="#f8e04a" stroke="#c9a91f" stroke-width="0.9"/><text x="5.5" y="12.4" font-family="Liberation Sans,sans-serif" font-weight="bold" font-size="8.6" fill="#3a3a1a">abc</text><path d="M8 19.500C11 15.500 18 15.500 22 19.500C18 23 11 23 8 19.500Z" fill="#fff" stroke="#555" stroke-width="0.8"/><circle cx="15" cy="19.300" r="2.600" fill="#5b8cc4"/><circle cx="15" cy="19.300" r="1.100" fill="#1a2a44"/></svg>
<svg style="left:829.0px;top:94.0px" width="24" height="24" viewBox="0 0 24 24"><path d="M1 9.5L5 4H20.5V15H5Z" fill="#f8e04a" stroke="#c9a91f" stroke-width="0.9"/><text x="5.5" y="12.4" font-family="Liberation Sans,sans-serif" font-weight="bold" font-size="8.6" fill="#3a3a1a">abc</text><rect x="13.500" y="14" width="10" height="9.500" rx="1.500" fill="#2f4760" stroke="#1f3347" stroke-width="0.6"/><path d="M15 18.800H19V16.300L22.300 18.800L19 21.300V18.800" fill="#fff" stroke="#fff" stroke-width="1.400"/></svg>
<svg style="left:860.0px;top:94.0px" width="24" height="24" viewBox="0 0 24 24"><path d="M1 9.5L5 4H20.5V15H5Z" fill="#f8e04a" stroke="#c9a91f" stroke-width="0.9"/><text x="5.5" y="12.4" font-family="Liberation Sans,sans-serif" font-weight="bold" font-size="8.6" fill="#3a3a1a">abc</text><rect x="13.500" y="14" width="10" height="9.500" rx="1.500" fill="#3f6280" stroke="#2f4c66" stroke-width="0.6"/><path d="M17 21.500A2.800 2.800 0 1 0 16 18.500" fill="none" stroke="#fff" stroke-width="1.500"/><path d="M14.600 17.300L16.300 20.300L18.300 17.800Z" fill="#fff"/></svg>
<div class="a" style="left:692px;top:93px;width:1px;height:26px;background:#d4d4d4"></div>
<div class="a" style="left:761px;top:93px;width:1px;height:26px;background:#d4d4d4"></div>
<svg style="left:4px;top:126px" width="4" height="28"><rect x="0" y="0" width="1.5" height="1.5" fill="#b4b4b4"/><rect x="1.5" y="1.5" width="1.5" height="1.5" fill="#fff"/><rect x="0" y="3" width="1.5" height="1.5" fill="#b4b4b4"/><rect x="1.5" y="4.5" width="1.5" height="1.5" fill="#fff"/><rect x="0" y="6" width="1.5" height="1.5" fill="#b4b4b4"/><rect x="1.5" y="7.5" width="1.5" height="1.5" fill="#fff"/><rect x="0" y="9" width="1.5" height="1.5" fill="#b4b4b4"/><rect x="1.5" y="10.5" width="1.5" height="1.5" fill="#fff"/><rect x="0" y="12" width="1.5" height="1.5" fill="#b4b4b4"/><rect x="1.5" y="13.5" width="1.5" height="1.5" fill="#fff"/><rect x="0" y="15" width="1.5" height="1.5" fill="#b4b4b4"/><rect x="1.5" y="16.5" width="1.5" height="1.5" fill="#fff"/><rect x="0" y="18" width="1.5" height="1.5" fill="#b4b4b4"/><rect x="1.5" y="19.5" width="1.5" height="1.5" fill="#fff"/><rect x="0" y="21" width="1.5" height="1.5" fill="#b4b4b4"/><rect x="1.5" y="22.5" width="1.5" height="1.5" fill="#fff"/><rect x="0" y="24" width="1.5" height="1.5" fill="#b4b4b4"/><rect x="1.5" y="25.5" width="1.5" height="1.5" fill="#fff"/><rect x="0" y="27" width="1.5" height="1.5" fill="#b4b4b4"/><rect x="1.5" y="28.5" width="1.5" height="1.5" fill="#fff"/></svg>
<svg style="left:15.0px;top:128.0px" width="24" height="24" viewBox="0 0 24 24"><path d="M4 20V12C4 6 8 4 14 4H20" fill="none" stroke="#c8cac8" stroke-width="1.100" stroke-dasharray="2 2"/><rect x="2.500" y="19" width="3" height="3" fill="#f0f0f0" stroke="#c0c2c0"/><rect x="19" y="2.500" width="3" height="3" fill="#f0f0f0" stroke="#c0c2c0"/><rect x="5" y="4" width="3" height="3" fill="#f0f0f0" stroke="#c0c2c0"/></svg>
<svg style="left:45.0px;top:128.0px" width="24" height="24" viewBox="0 0 24 24"><path d="M2.500 2.500L21.500 21.500H2.500Z" fill="#ddd7d3" stroke="#cfc6c1" stroke-width="0.9"/><path d="M6.500 12L12.500 18H6.500Z" fill="#f0f0f0" stroke="#cfc6c1" stroke-width="0.8"/><rect x="16" y="3" width="5.500" height="18.500" fill="#e2dcd8" stroke="#cfc6c1" stroke-width="0.7"/></svg>
<svg style="left:76.0px;top:128.0px" width="24" height="24" viewBox="0 0 24 24"><g fill="#d3d5d3" stroke="#c0c2c0" stroke-width="0.7"><circle cx="11" cy="4.500" r="2.300"/><circle cx="19" cy="6.500" r="2.300"/><circle cx="4" cy="12" r="2.300"/></g><rect x="12.500" y="13" width="10" height="10" rx="1.500" fill="#c8cac8"/><path d="M14.500 18H18V15.500L21.300 18L18 20.500V18" fill="#fff" stroke="#fff" stroke-width="1.200"/></svg>
<svg style="left:123.0px;top:128.0px" width="24" height="24" viewBox="0 0 24 24"><path d="M1.500 7.500C1.500 3 6 2.500 9.500 3.500C12.500 4.300 14 3 17 3.300C21 3.700 22.500 7 22 10C21.500 13.500 18 14 15.500 13C13 12 12 11.300 9.500 12.300C6 13.700 1.500 13 1.500 7.500Z" fill="#d8dad8" stroke="#c6c8c6" stroke-width="0.800"/><rect x="14" y="14" width="9" height="9" rx="1.500" fill="#cccecc"/><path d="M17 21.500A2.600 2.600 0 1 0 16 18.500" fill="none" stroke="#fff" stroke-width="1.300"/></svg>
<svg style="left:154.0px;top:128.0px" width="24" height="24" viewBox="0 0 24 24"><circle cx="8.500" cy="8" r="6.500" fill="#d3d5d3" stroke="#c0c2c0" stroke-width="0.7"/><path d="M9 12L13 9.500H18L21 14L18 19H13L10 15Z" fill="#e2e2e2" stroke="#c2c4c2" stroke-width="0.8"/><path d="M8 6L14 13" stroke="#c0c2c0" stroke-width="0.9"/></svg>
<svg style="left:185.0px;top:128.0px" width="24" height="24" viewBox="0 0 24 24"><path d="M1.500 7.500C1.500 3 6 2.500 9.500 3.500C12.500 4.300 14 3 17 3.300C21 3.700 22.500 7 22 10C21.500 13.500 18 14 15.500 13C13 12 12 11.300 9.500 12.300C6 13.700 1.500 13 1.500 7.500Z" fill="#d8dad8" stroke="#c6c8c6" stroke-width="0.800"/><ellipse cx="8" cy="7.300" rx="3.600" ry="2.600" fill="#f0f0f0" stroke="#c6c8c6" stroke-width="0.800" transform="rotate(-12 8 7.300)"/><rect x="14" y="14" width="10" height="10" rx="1.500" fill="#d6d3c8" stroke="#cbc8bd" stroke-width="0.800"/><path d="M19 15.2V22.8M15.2 19H22.8" stroke="#fffef0" stroke-width="1.150" fill="none"/><path d="M16.4 16.4L21.6 21.6M21.6 16.4L16.4 21.6" stroke="#fffef0" stroke-width="0.900" fill="none"/><circle cx="19" cy="19" r="0.700" fill="#d6d3c8"/></svg>
<svg style="left:216.0px;top:128.0px" width="24" height="24" viewBox="0 0 24 24"><path d="M1.500 7.500C1.500 3 6 2.500 9.500 3.500C12.500 4.300 14 3 17 3.300C21 3.700 22.500 7 22 10C21.500 13.500 18 14 15.500 13C13 12 12 11.300 9.500 12.300C6 13.700 1.500 13 1.500 7.500Z" fill="#d8dad8" stroke="#c6c8c6" stroke-width="0.800"/><path d="M2 20C2 16 6 13.500 9 14.500C11 15.500 8 21.500 4 22C2.500 22 2 21 2 20Z" fill="#d2d4d2"/><rect x="14" y="14" width="10" height="10" rx="1.500" fill="#d6d3c8" stroke="#cbc8bd" stroke-width="0.800"/><path d="M19 15.2V22.8M15.2 19H22.8" stroke="#fffef0" stroke-width="1.150" fill="none"/><path d="M16.4 16.4L21.6 21.6M21.6 16.4L16.4 21.6" stroke="#fffef0" stroke-width="0.900" fill="none"/><circle cx="19" cy="19" r="0.700" fill="#d6d3c8"/></svg>
<svg style="left:247.0px;top:128.0px" width="24" height="24" viewBox="0 0 24 24"><path d="M1.500 7.500C1.500 3 6 2.500 9.500 3.500C12.500 4.300 14 3 17 3.300C21 3.700 22.500 7 22 10C21.500 13.500 18 14 15.500 13C13 12 12 11.300 9.500 12.300C6 13.700 1.500 13 1.500 7.500Z" fill="#d8dad8" stroke="#c6c8c6" stroke-width="0.800"/><ellipse cx="8" cy="7.300" rx="3.600" ry="2.600" fill="#d0d2d0" stroke="#bfc1bf" stroke-width="0.800" transform="rotate(-12 8 7.300)"/><rect x="14" y="14" width="10" height="10" rx="1.500" fill="#d6d3c8" stroke="#cbc8bd" stroke-width="0.800"/><path d="M19 15.2V22.8M15.2 19H22.8" stroke="#fffef0" stroke-width="1.150" fill="none"/><path d="M16.4 16.4L21.6 21.6M21.6 16.4L16.4 21.6" stroke="#fffef0" stroke-width="0.900" fill="none"/><circle cx="19" cy="19" r="0.700" fill="#d6d3c8"/></svg>
<svg style="left:278.0px;top:128.0px" width="24" height="24" viewBox="0 0 24 24"><path d="M1.500 7.500C1.500 3 6 2.500 9.500 3.500C12.500 4.300 14 3 17 3.300C21 3.700 22.500 7 22 10C21.500 13.500 18 14 15.500 13C13 12 12 11.300 9.500 12.300C6 13.700 1.500 13 1.500 7.500Z" fill="#d8dad8" stroke="#c6c8c6" stroke-width="0.800"/><ellipse cx="8" cy="7.300" rx="3.600" ry="2.600" fill="#f0f0f0" stroke="#c6c8c6" stroke-width="0.800" transform="rotate(-12 8 7.300)"/><rect x="14" y="14" width="9" height="9" rx="1.5" fill="#cccecc"/><path d="M16.5 16.5L20.5 20.5M20.5 16.5L16.5 20.5" stroke="#fff" stroke-width="1.5" fill="none"/></svg>
<svg style="left:309.0px;top:128.0px" width="24" height="24" viewBox="0 0 24 24"><path d="M1.500 7.500C1.500 3 6 2.500 9.500 3.500C12.500 4.300 14 3 17 3.300C21 3.700 22.500 7 22 10C21.500 13.500 18 14 15.500 13C13 12 12 11.300 9.500 12.300C6 13.700 1.500 13 1.500 7.500Z" fill="#d8dad8" stroke="#c6c8c6" stroke-width="0.800"/><path d="M2 20C2 16 6 13.500 9 14.500C11 15.500 8 21.500 4 22C2.500 22 2 21 2 20Z" fill="#d2d4d2"/><rect x="14" y="14" width="9" height="9" rx="1.5" fill="#cccecc"/><path d="M16.5 16.5L20.5 20.5M20.5 16.5L16.5 20.5" stroke="#fff" stroke-width="1.5" fill="none"/></svg>
<svg style="left:340.0px;top:128.0px" width="24" height="24" viewBox="0 0 24 24"><path d="M3 6C5 2 12 3 14 4C17 5 21 3 21.500 7C22 11 17 12 14 12C11 12 10 15 9 18C8 21 3 21 3 17Z" fill="#d2d4d2" stroke="#c0c2c0" stroke-width="0.7"/></svg>
<svg style="left:371.0px;top:128.0px" width="24" height="24" viewBox="0 0 24 24"><path d="M4 18C2 13 8 6 14 4C19 2 23 5 21 9C19 14 14 14 11 18C9 21 5 21 4 18Z" fill="#d2d4d2" stroke="#bfc1bf" stroke-width="0.8"/><path d="M7 16.500C6 13 10 8.500 14.500 7C17.500 6 19 7 18 9" fill="none" stroke="#b8bab8" stroke-width="0.8"/></svg>
<svg style="left:402.0px;top:128.0px" width="24" height="24" viewBox="0 0 24 24"><path d="M3 3L9 18L15 3" fill="none" stroke="#c2c4c2" stroke-width="1"/><circle cx="3" cy="3" r="1.300" fill="#f0f0f0" stroke="#c0c2c0"/><rect x="14" y="3" width="3" height="3" fill="#f0f0f0" stroke="#c0c2c0" stroke-width="0.7"/><rect x="19" y="3" width="3" height="3" fill="#f0f0f0" stroke="#c0c2c0" stroke-width="0.7"/><rect x="13.500" y="13.500" width="9.500" height="9.500" rx="1.500" fill="#cccecc"/><path d="M16 20A2.500 2.500 0 1 0 16 17" fill="none" stroke="#fff" stroke-width="1.200"/></svg>
<svg style="left:433.0px;top:128.0px" width="24" height="24" viewBox="0 0 24 24"><path d="M12 1V23M3 12H22" stroke="#c2c4c2" stroke-width="1"/><g fill="#f0f0f0" stroke="#c0c2c0" stroke-width="0.8"><rect x="10" y="10" width="4" height="4"/><rect x="16" y="2.500" width="3.500" height="3.500"/><rect x="19.500" y="5.500" width="3.500" height="3.500"/><rect x="3" y="16.500" width="3.500" height="3.500"/></g></svg>
<svg style="left:464.0px;top:128.0px" width="24" height="24" viewBox="0 0 24 24"><path d="M2 8C2 3 7 2 10 5C12 3 18 2 20 6C22 10 17 13 14 12C12 13 10 13 9 12C6 13 2 12 2 8Z" fill="#d2d4d2" stroke="#c0c2c0" stroke-width="0.7"/><path d="M8 3L15 17M16 3L9 17" stroke="#bcbebc" stroke-width="1.200"/><circle cx="8" cy="20" r="2.500" fill="none" stroke="#bcbebc" stroke-width="1.200"/><circle cx="16" cy="20" r="2.500" fill="none" stroke="#bcbebc" stroke-width="1.200"/></svg>
<svg style="left:495.0px;top:128.0px" width="24" height="24" viewBox="0 0 24 24"><path d="M2 8C2 3 7 2 10 5C12 3 18 2 20 6C22 10 17 13 14 12C12 13 10 13 9 12C6 13 2 12 2 8Z" fill="#d2d4d2" stroke="#c0c2c0" stroke-width="0.7"/><path d="M8 3L15 17M16 3L9 17" stroke="#bcbebc" stroke-width="1.200"/><circle cx="8" cy="20" r="2.500" fill="none" stroke="#bcbebc" stroke-width="1.200"/><circle cx="16" cy="20" r="2.500" fill="none" stroke="#bcbebc" stroke-width="1.200"/></svg>
<svg style="left:526.0px;top:128.0px" width="24" height="24" viewBox="0 0 24 24"><path d="M2 8C2 3 7 2 11 4C15 2 21 3 21 8C21 12 16 13 14 12L11 20L9 12C6 13 2 12 2 8Z" fill="#d2d4d2" stroke="#c0c2c0" stroke-width="0.7"/><path d="M7 6H16M7 8.500H16" stroke="#babcba" stroke-width="0.8"/></svg>
<svg style="left:557.0px;top:128.0px" width="24" height="24" viewBox="0 0 24 24"><path d="M3 4H21M3 8H21M3 12H21M3 16H21M3 20H21" stroke="#c2c4c2" stroke-width="1"/><path d="M7 2V22M12 2V22M17 2V22" stroke="#d3d5d3" stroke-width="0.8"/><rect x="8" y="6" width="8" height="3.500" fill="#e4e4e4" stroke="#c0c2c0" stroke-width="0.6"/><rect x="8" y="14" width="8" height="3.500" fill="#e4e4e4" stroke="#c0c2c0" stroke-width="0.6"/></svg>
<svg style="left:588.0px;top:128.0px" width="24" height="24" viewBox="0 0 24 24"><path d="M12 4L20 9L12 13Z" fill="#e4e4e4" stroke="#c0c2c0" stroke-width="0.8"/><path d="M12 13L8 21H16Z" fill="#eee" stroke="#c8cac8" stroke-width="0.8"/><path d="M9 4C5 6 4 11 6 15" fill="none" stroke="#c0c2c0" stroke-width="1"/><path d="M8 2L10 5L6.500 5.500Z" fill="#c0c2c0"/></svg>
<svg style="left:108px;top:138px" width="8" height="5" viewBox="0 0 8 5"><path d="M0 0H8L4 4.5Z" fill="#888"/></svg>
<svg style="left:619px;top:138px" width="8" height="5" viewBox="0 0 8 5"><path d="M0 0H8L4 4.5Z" fill="#888"/></svg>
<div class="a" style="left:632px;top:124px;width:1px;height:31px;background:#d0d0d0"></div><div class="a" style="left:633px;top:124px;width:1px;height:31px;background:#fff"></div>
<svg style="left:637px;top:126px" width="4" height="28"><rect x="0" y="0" width="1.5" height="1.5" fill="#b4b4b4"/><rect x="1.5" y="1.5" width="1.5" height="1.5" fill="#fff"/><rect x="0" y="3" width="1.5" height="1.5" fill="#b4b4b4"/><rect x="1.5" y="4.5" width="1.5" height="1.5" fill="#fff"/><rect x="0" y="6" width="1.5" height="1.5" fill="#b4b4b4"/><rect x="1.5" y="7.5" width="1.5" height="1.5" fill="#fff"/><rect x="0" y="9" width="1.5" height="1.5" fill="#b4b4b4"/><rect x="1.5" y="10.5" width="1.5" height="1.5" fill="#fff"/><rect x="0" y="12" width="1.5" height="1.5" fill="#b4b4b4"/><rect x="1.5" y="13.5" width="1.5" height="1.5" fill="#fff"/><rect x="0" y="15" width="1.5" height="1.5" fill="#b4b4b4"/><rect x="1.5" y="16.5" width="1.5" height="1.5" fill="#fff"/><rect x="0" y="18" width="1.5" height="1.5" fill="#b4b4b4"/><rect x="1.5" y="19.5" width="1.5" height="1.5" fill="#fff"/><rect x="0" y="21" width="1.5" height="1.5" fill="#b4b4b4"/><rect x="1.5" y="22.5" width="1.5" height="1.5" fill="#fff"/><rect x="0" y="24" width="1.5" height="1.5" fill="#b4b4b4"/><rect x="1.5" y="25.5" width="1.5" height="1.5" fill="#fff"/><rect x="0" y="27" width="1.5" height="1.5" fill="#b4b4b4"/><rect x="1.5" y="28.5" width="1.5" height="1.5" fill="#fff"/></svg>
<div class="a" style="left:645px;top:125px;width:31px;height:29px;background:#cce4f7;border:1px solid #99c9ef"></div>
<div class="a" style="left:707px;top:125px;width:31px;height:29px;background:#cce4f7;border:1px solid #99c9ef"></div>
<svg style="left:649.0px;top:128.0px" width="24" height="24" viewBox="0 0 24 24"><path d="M13.300 6.500L17.400 10.600A5.500 5.500 0 0 1 9.600 18.400L5.500 14.300" fill="none" stroke="#7d1013" stroke-width="6"/><path d="M13.600 6.800L17.400 10.600A5.500 5.500 0 0 1 9.600 18.400L5.800 14.600" fill="none" stroke="#cc1f24" stroke-width="4.600"/><path d="M14 7.200L15.700 8.900" stroke="#f6f6f6" stroke-width="4.200" fill="none"/><path d="M6.200 15L7.900 16.700" stroke="#f6f6f6" stroke-width="4.200" fill="none"/><path d="M16.500 11.500A4.300 4.300 0 0 1 12 17.800" fill="none" stroke="#e8666a" stroke-width="0.900"/></svg>
<svg style="left:680.0px;top:128.0px" width="24" height="24" viewBox="0 0 24 24"><path d="M5 3L11 19L17 3" fill="none" stroke="#6aaa5e" stroke-width="1.200"/><path d="M8 11H14M11 19V12" stroke="#6aaa5e" stroke-width="0.9"/><g fill="#dfeeda" stroke="#6aaa5e" stroke-width="0.8"><circle cx="5" cy="3.500" r="1.500"/><circle cx="8" cy="8" r="1.400"/><circle cx="9.500" cy="13" r="1.400"/><rect x="15" y="2" width="3" height="3"/><rect x="18.500" y="5" width="3" height="3"/><rect x="15" y="9" width="3" height="3"/><rect x="19" y="11.500" width="3" height="3"/></g></svg>
<svg style="left:710.5px;top:128.0px" width="24" height="24" viewBox="0 0 24 24"><path d="M4.500 5.500L11.500 19.500L19.500 5.500" fill="none" stroke="#7fbf7f" stroke-width="1.400"/></svg>
<svg style="left:696px;top:148px" width="8" height="5" viewBox="0 0 8 5"><path d="M0 0H8L4 4.5Z" fill="#222"/></svg>
<svg style="left:727px;top:148px" width="8" height="5" viewBox="0 0 8 5"><path d="M0 0H8L4 4.5Z" fill="#222"/></svg>
<div class="inp" style="left:738px;top:130px;width:87px;height:20px;border-color:#a0a0a0"></div>
<div class="t" style="left:741.5px;top:140.5px;font-size:13.5px;transform-origin:0 50%;transform:translateY(-50%) scaleX(0.9657);">20</div>
<div class="a" style="left:809px;top:131px;width:15px;height:9px;background:#f0f0f0;border:1px solid #d4d4d4"></div>
<div class="a" style="left:809px;top:140px;width:15px;height:9px;background:#f0f0f0;border:1px solid #d4d4d4"></div>
<svg style="left:813px;top:133px" width="7" height="14" viewBox="0 0 7 14"><path d="M0 4.500H7L3.500 0.500ZM0 9.500H7L3.500 13.500Z" fill="#111"/></svg>
<div class="combo" style="left:825px;top:130px;width:75px;height:20px;"></div>
<div class="t" style="left:829.5px;top:140.5px;font-size:13.5px;transform-origin:0 50%;transform:translateY(-50%) scaleX(0.9118);">px</div>
<svg style="left:4px;top:160px" width="4" height="44"><rect x="0" y="0" width="1.5" height="1.5" fill="#b4b4b4"/><rect x="1.5" y="1.5" width="1.5" height="1.5" fill="#fff"/><rect x="0" y="3" width="1.5" height="1.5" fill="#b4b4b4"/><rect x="1.5" y="4.5" width="1.5" height="1.5" fill="#fff"/><rect x="0" y="6" width="1.5" height="1.5" fill="#b4b4b4"/><rect x="1.5" y="7.5" width="1.5" height="1.5" fill="#fff"/><rect x="0" y="9" width="1.5" height="1.5" fill="#b4b4b4"/><rect x="1.5" y="10.5" width="1.5" height="1.5" fill="#fff"/><rect x="0" y="12" width="1.5" height="1.5" fill="#b4b4b4"/><rect x="1.5" y="13.5" width="1.5" height="1.5" fill="#fff"/><rect x="0" y="15" width="1.5" height="1.5" fill="#b4b4b4"/><rect x="1.5" y="16.5" width="1.5" height="1.5" fill="#fff"/><rect x="0" y="18" width="1.5" height="1.5" fill="#b4b4b4"/><rect x="1.5" y="19.5" width="1.5" height="1.5" fill="#fff"/><rect x="0" y="21" width="1.5" height="1.5" fill="#b4b4b4"/><rect x="1.5" y="22.5" width="1.5" height="1.5" fill="#fff"/><rect x="0" y="24" width="1.5" height="1.5" fill="#b4b4b4"/><rect x="1.5" y="25.5" width="1.5" height="1.5" fill="#fff"/><rect x="0" y="27" width="1.5" height="1.5" fill="#b4b4b4"/><rect x="1.5" y="28.5" width="1.5" height="1.5" fill="#fff"/><rect x="0" y="30" width="1.5" height="1.5" fill="#b4b4b4"/><rect x="1.5" y="31.5" width="1.5" height="1.5" fill="#fff"/><rect x="0" y="33" width="1.5" height="1.5" fill="#b4b4b4"/><rect x="1.5" y="34.5" width="1.5" height="1.5" fill="#fff"/><rect x="0" y="36" width="1.5" height="1.5" fill="#b4b4b4"/><rect x="1.5" y="37.5" width="1.5" height="1.5" fill="#fff"/><rect x="0" y="39" width="1.5" height="1.5" fill="#b4b4b4"/><rect x="1.5" y="40.5" width="1.5" height="1.5" fill="#fff"/><rect x="0" y="42" width="1.5" height="1.5" fill="#b4b4b4"/><rect x="1.5" y="43.5" width="1.5" height="1.5" fill="#fff"/></svg>
<svg style="left:13.5px;top:168.0px" width="28" height="28" viewBox="0 0 24 24"><rect x="2.500" y="2.500" width="15.500" height="15.500" fill="#e4e4d8" stroke="#222" stroke-width="0.9" stroke-dasharray="1.600 1.200"/><rect x="3.200" y="3.200" width="10.500" height="10.500" fill="#f5e23c" stroke="#d8c424" stroke-width="0.6"/><path d="M10.500 9.500L10.500 21L13.400 18.200L15.700 23L18 22L15.800 17.400L19.800 17Z" fill="#fff" stroke="#444" stroke-width="0.9"/></svg>
<svg style="left:43px;top:180px" width="8" height="5" viewBox="0 0 8 5"><path d="M0 0H8L4 4.5Z" fill="#222"/></svg>
<svg style="left:187px;top:160px" width="4" height="10"><rect x="0" y="0" width="1.5" height="1.5" fill="#b4b4b4"/><rect x="1.5" y="1.5" width="1.5" height="1.5" fill="#fff"/><rect x="0" y="3" width="1.5" height="1.5" fill="#b4b4b4"/><rect x="1.5" y="4.5" width="1.5" height="1.5" fill="#fff"/><rect x="0" y="6" width="1.5" height="1.5" fill="#b4b4b4"/><rect x="1.5" y="7.5" width="1.5" height="1.5" fill="#fff"/><rect x="0" y="9" width="1.5" height="1.5" fill="#b4b4b4"/><rect x="1.5" y="10.5" width="1.5" height="1.5" fill="#fff"/></svg>
<svg style="left:262px;top:160px" width="4" height="10"><rect x="0" y="0" width="1.5" height="1.5" fill="#b4b4b4"/><rect x="1.5" y="1.5" width="1.5" height="1.5" fill="#fff"/><rect x="0" y="3" width="1.5" height="1.5" fill="#b4b4b4"/><rect x="1.5" y="4.5" width="1.5" height="1.5" fill="#fff"/><rect x="0" y="6" width="1.5" height="1.5" fill="#b4b4b4"/><rect x="1.5" y="7.5" width="1.5" height="1.5" fill="#fff"/><rect x="0" y="9" width="1.5" height="1.5" fill="#b4b4b4"/><rect x="1.5" y="10.5" width="1.5" height="1.5" fill="#fff"/></svg>
<svg style="left:338px;top:160px" width="4" height="10"><rect x="0" y="0" width="1.5" height="1.5" fill="#b4b4b4"/><rect x="1.5" y="1.5" width="1.5" height="1.5" fill="#fff"/><rect x="0" y="3" width="1.5" height="1.5" fill="#b4b4b4"/><rect x="1.5" y="4.5" width="1.5" height="1.5" fill="#fff"/><rect x="0" y="6" width="1.5" height="1.5" fill="#b4b4b4"/><rect x="1.5" y="7.5" width="1.5" height="1.5" fill="#fff"/><rect x="0" y="9" width="1.5" height="1.5" fill="#b4b4b4"/><rect x="1.5" y="10.5" width="1.5" height="1.5" fill="#fff"/></svg>
<div class="a" style="left:183px;top:158px;width:1px;height:12px;background:#d8d8d8"></div>
<div class="a" style="left:258px;top:158px;width:1px;height:12px;background:#d8d8d8"></div>
<div class="a" style="left:334px;top:158px;width:1px;height:12px;background:#d8d8d8"></div>
<svg style="left:407px;top:180px" width="8" height="5" viewBox="0 0 8 5"><path d="M0 0H8L4 4.5Z" fill="#444"/></svg>
<div class="t" style="left:419px;top:182.5px;font-size:14.5px;transform-origin:0 50%;transform:translateY(-50%) scaleX(0.8181);">Band:</div>
<div class="a" style="left:451px;top:171px;width:37px;height:22px;background:#ccc;border:1px solid #c0c0c0"></div>
<div class="t " style="left:456px;top:182px;transform:translateY(-50%);font-size:14.5px;color:#888">1</div>
<svg style="left:471.5px;top:180.5px" width="9" height="5" viewBox="0 0 9 5"><path d="M0.5 0.3 L4.5 4.5 L8.5 0.3" fill="none" stroke="#999" stroke-width="1.2"/></svg>
<div class="a" style="left:499px;top:170px;width:50px;height:24px;background:#f4f4f4;border:1px solid #bdbdbd"></div>
<div class="t" style="left:503px;top:182.5px;font-size:14px;transform-origin:0 50%;transform:translateY(-50%) scaleX(0.8873);color:#6a6a6a;">0,0000</div>
<svg style="left:563.0px;top:170.0px" width="24" height="24" viewBox="0 0 24 24"><rect x="0" y="0" width="24" height="24" fill="#ececec"/><path d="M0 0H8V8H0ZM16 0H24V8H16ZM8 8H16V16H8ZM0 16H8V24H0ZM16 16H24V24H16Z" fill="#e4e4e4"/><path d="M4 21L5.500 16L16 4L19.500 7L9 18.500Z" fill="#d3d5d3" stroke="#c2c4c2" stroke-width="0.7"/></svg>
<svg style="left:594.0px;top:170.0px" width="24" height="24" viewBox="0 0 24 24"><rect x="0" y="0" width="24" height="24" fill="#ececec"/><path d="M0 0H8V8H0ZM16 0H24V8H16ZM8 8H16V16H8ZM0 16H8V24H0ZM16 16H24V24H16Z" fill="#e4e4e4"/><path d="M7 8L16 4L21 14L12 19Z" fill="#cfd1cf" stroke="#bcbebc" stroke-width="0.8"/><ellipse cx="11.500" cy="6" rx="5" ry="2.300" fill="#e6e6e6" stroke="#bcbebc" stroke-width="0.7" transform="rotate(-24 11.500 6)"/><path d="M4 12C3 15 3 19 5 21H12L9 10Z" fill="#c6c8c6"/></svg>
<svg style="left:625.0px;top:170.0px" width="24" height="24" viewBox="0 0 24 24"><rect x="0" y="0" width="24" height="24" fill="#ececec"/><path d="M0 0H8V8H0ZM16 0H24V8H16ZM8 8H16V16H8ZM0 16H8V24H0ZM16 16H24V24H16Z" fill="#e4e4e4"/><path d="M5 15L15 4L21 9L11 20Z" fill="#d3d5d3" stroke="#c2c4c2" stroke-width="0.8"/><path d="M5 15L8.500 11L14.500 16L11 20Z" fill="#f0f0f0" stroke="#c2c4c2" stroke-width="0.6"/><path d="M2 14V22H10" fill="none" stroke="#c2c4c2" stroke-width="0.9" stroke-dasharray="1.500 1.500"/></svg>
<svg style="left:656.0px;top:170.0px" width="24" height="24" viewBox="0 0 24 24"><rect x="0" y="0" width="24" height="24" fill="#ececec"/><path d="M0 0H8V8H0ZM16 0H24V8H16ZM8 8H16V16H8ZM0 16H8V24H0ZM16 16H24V24H16Z" fill="#e4e4e4"/><text x="5" y="20" font-family="Liberation Serif,serif" font-size="24" fill="#c0c2c0">ε</text></svg>
<svg style="left:687.0px;top:170.0px" width="24" height="24" viewBox="0 0 24 24"><rect x="0" y="0" width="24" height="24" fill="#ececec"/><path d="M0 0H8V8H0ZM16 0H24V8H16ZM8 8H16V16H8ZM0 16H8V24H0ZM16 16H24V24H16Z" fill="#e4e4e4"/><path d="M2 16C5 0 9 0 12 12C15 24 19 24 22 8" fill="none" stroke="#d4c8dc" stroke-width="1.500"/><path d="M2 12C6 6 10 18 14 12C17 8 20 14 22 12" fill="none" stroke="#cfd1cf" stroke-width="1.200"/></svg>
<svg style="left:718.0px;top:170.0px" width="24" height="24" viewBox="0 0 24 24"><rect x="0" y="0" width="24" height="24" fill="#ececec"/><path d="M0 0H8V8H0ZM16 0H24V8H16ZM8 8H16V16H8ZM0 16H8V24H0ZM16 16H24V24H16Z" fill="#e4e4e4"/><path d="M3 10L10 4V8C16 8 19 11 19 14.500C19 18 16 20.500 12 20.500V17.500C14 17.500 15.500 16.500 15.500 14.500C15.500 12.500 13.500 12 10 12V16Z" fill="#e2e2e2" stroke="#c2c4c2" stroke-width="0.9"/></svg>
<svg style="left:749.0px;top:170.0px" width="24" height="24" viewBox="0 0 24 24"><rect x="0" y="0" width="24" height="24" fill="#ececec"/><path d="M0 0H8V8H0ZM16 0H24V8H16ZM8 8H16V16H8ZM0 16H8V24H0ZM16 16H24V24H16Z" fill="#e4e4e4"/><path d="M21 10L14 4V8C8 8 5 11 5 14.500C5 18 8 20.500 12 20.500V17.500C10 17.500 8.500 16.500 8.500 14.500C8.500 12.500 10.500 12 14 12V16Z" fill="#e2e2e2" stroke="#c2c4c2" stroke-width="0.9"/></svg>
<svg style="left:780.0px;top:170.0px" width="24" height="24" viewBox="0 0 24 24"><rect x="0" y="0" width="24" height="24" fill="#ececec"/><path d="M0 0H8V8H0ZM16 0H24V8H16ZM8 8H16V16H8ZM0 16H8V24H0ZM16 16H24V24H16Z" fill="#e4e4e4"/><path d="M4 19L19 5" stroke="#c6c8c6" stroke-width="4" stroke-linecap="round"/><path d="M5 5L19 19" stroke="#d2d4d2" stroke-width="4" stroke-linecap="round"/></svg>
<svg style="left:811.0px;top:170.0px" width="24" height="24" viewBox="0 0 24 24"><rect width="24" height="24" fill="#9a9a9a"/><path d="M0 0H8V8H0ZM16 0H24V8H16ZM8 8H16V16H8ZM0 16H8V24H0ZM16 16H24V24H16Z" fill="#8a8a8a"/><path d="M6 20L15 9" stroke="#5a4a1a" stroke-width="4.500" stroke-linecap="round"/><path d="M6 20L14 10" stroke="#e8c65a" stroke-width="2.800" stroke-linecap="round"/><path d="M13 9C12 6 14 3 17.500 3.500L15.500 6L17.500 8.500L20.500 7C21 10 18 12 15 11Z" fill="#e8e8e8" stroke="#888" stroke-width="0.7"/></svg>
<svg style="left:842.0px;top:170.0px" width="24" height="24" viewBox="0 0 24 24"><rect x="1" y="1" width="22" height="22" rx="1.500" fill="#3f78b8" stroke="#1f3f66" stroke-width="0.9"/><path d="M1.500 14L23 9V22.500H1.500Z" fill="#2a5a94"/><rect x="1" y="1" width="5" height="22" fill="#2fa84a" stroke="#14602a" stroke-width="0.9"/><text x="9" y="19" font-family="Liberation Sans,sans-serif" font-weight="bold" font-size="17" fill="#fff">?</text></svg>
<div class="a" style="left:871px;top:158px;width:1px;height:47px;background:#d0d0d0"></div><div class="a" style="left:872px;top:158px;width:1px;height:47px;background:#fff"></div>
<svg style="left:876px;top:162px" width="4" height="40"><rect x="0" y="0" width="1.5" height="1.5" fill="#b4b4b4"/><rect x="1.5" y="1.5" width="1.5" height="1.5" fill="#fff"/><rect x="0" y="3" width="1.5" height="1.5" fill="#b4b4b4"/><rect x="1.5" y="4.5" width="1.5" height="1.5" fill="#fff"/><rect x="0" y="6" width="1.5" height="1.5" fill="#b4b4b4"/><rect x="1.5" y="7.5" width="1.5" height="1.5" fill="#fff"/><rect x="0" y="9" width="1.5" height="1.5" fill="#b4b4b4"/><rect x="1.5" y="10.5" width="1.5" height="1.5" fill="#fff"/><rect x="0" y="12" width="1.5" height="1.5" fill="#b4b4b4"/><rect x="1.5" y="13.5" width="1.5" height="1.5" fill="#fff"/><rect x="0" y="15" width="1.5" height="1.5" fill="#b4b4b4"/><rect x="1.5" y="16.5" width="1.5" height="1.5" fill="#fff"/><rect x="0" y="18" width="1.5" height="1.5" fill="#b4b4b4"/><rect x="1.5" y="19.5" width="1.5" height="1.5" fill="#fff"/><rect x="0" y="21" width="1.5" height="1.5" fill="#b4b4b4"/><rect x="1.5" y="22.5" width="1.5" height="1.5" fill="#fff"/><rect x="0" y="24" width="1.5" height="1.5" fill="#b4b4b4"/><rect x="1.5" y="25.5" width="1.5" height="1.5" fill="#fff"/><rect x="0" y="27" width="1.5" height="1.5" fill="#b4b4b4"/><rect x="1.5" y="28.5" width="1.5" height="1.5" fill="#fff"/><rect x="0" y="30" width="1.5" height="1.5" fill="#b4b4b4"/><rect x="1.5" y="31.5" width="1.5" height="1.5" fill="#fff"/><rect x="0" y="33" width="1.5" height="1.5" fill="#b4b4b4"/><rect x="1.5" y="34.5" width="1.5" height="1.5" fill="#fff"/><rect x="0" y="36" width="1.5" height="1.5" fill="#b4b4b4"/><rect x="1.5" y="37.5" width="1.5" height="1.5" fill="#fff"/><rect x="0" y="39" width="1.5" height="1.5" fill="#b4b4b4"/><rect x="1.5" y="40.5" width="1.5" height="1.5" fill="#fff"/></svg>
<svg style="left:5px;top:211px" width="42" height="4"><rect x="0" y="0" width="1.5" height="1.5" fill="#b4b4b4"/><rect x="1.5" y="1.5" width="1.5" height="1.5" fill="#fff"/><rect x="3" y="0" width="1.5" height="1.5" fill="#b4b4b4"/><rect x="4.5" y="1.5" width="1.5" height="1.5" fill="#fff"/><rect x="6" y="0" width="1.5" height="1.5" fill="#b4b4b4"/><rect x="7.5" y="1.5" width="1.5" height="1.5" fill="#fff"/><rect x="9" y="0" width="1.5" height="1.5" fill="#b4b4b4"/><rect x="10.5" y="1.5" width="1.5" height="1.5" fill="#fff"/><rect x="12" y="0" width="1.5" height="1.5" fill="#b4b4b4"/><rect x="13.5" y="1.5" width="1.5" height="1.5" fill="#fff"/><rect x="15" y="0" width="1.5" height="1.5" fill="#b4b4b4"/><rect x="16.5" y="1.5" width="1.5" height="1.5" fill="#fff"/><rect x="18" y="0" width="1.5" height="1.5" fill="#b4b4b4"/><rect x="19.5" y="1.5" width="1.5" height="1.5" fill="#fff"/><rect x="21" y="0" width="1.5" height="1.5" fill="#b4b4b4"/><rect x="22.5" y="1.5" width="1.5" height="1.5" fill="#fff"/><rect x="24" y="0" width="1.5" height="1.5" fill="#b4b4b4"/><rect x="25.5" y="1.5" width="1.5" height="1.5" fill="#fff"/><rect x="27" y="0" width="1.5" height="1.5" fill="#b4b4b4"/><rect x="28.5" y="1.5" width="1.5" height="1.5" fill="#fff"/><rect x="30" y="0" width="1.5" height="1.5" fill="#b4b4b4"/><rect x="31.5" y="1.5" width="1.5" height="1.5" fill="#fff"/><rect x="33" y="0" width="1.5" height="1.5" fill="#b4b4b4"/><rect x="34.5" y="1.5" width="1.5" height="1.5" fill="#fff"/><rect x="36" y="0" width="1.5" height="1.5" fill="#b4b4b4"/><rect x="37.5" y="1.5" width="1.5" height="1.5" fill="#fff"/><rect x="39" y="0" width="1.5" height="1.5" fill="#b4b4b4"/><rect x="40.5" y="1.5" width="1.5" height="1.5" fill="#fff"/></svg>
<svg style="left:5.0px;top:222.0px" width="24" height="24" viewBox="0 0 24 24"><path d="M4 4L10 19.500L16.500 4L21 4" fill="none" stroke="#222" stroke-width="1.100"/><circle cx="4" cy="4" r="1.500" fill="#fff" stroke="#222" stroke-width="0.8"/><circle cx="16.500" cy="4" r="1.500" fill="#fff" stroke="#222" stroke-width="0.8"/><circle cx="21.500" cy="4" r="1.500" fill="#fff" stroke="#222" stroke-width="0.8"/><circle cx="10" cy="19.500" r="1.600" fill="#fff" stroke="#222" stroke-width="0.8"/><rect x="14.5" y="14.5" width="9.2" height="9.2" rx="1.500" fill="#5f9f66" stroke="#4f8a56" stroke-width="0.700"/><path d="M19.1 16.2V22.0M16.2 19.1H22.0" stroke="#fff" stroke-width="1.900" fill="none"/></svg>
<svg style="left:5.0px;top:252.0px" width="24" height="24" viewBox="0 0 24 24"><rect x="1" y="1" width="18" height="18" fill="#d8e4f2"/><path d="M1 1H7V7H1ZM13 1H19V7H13ZM7 7H13V13H7ZM1 13H7V19H1Z" fill="#22406b"/><path d="M7 1H13V7H7ZM1 7H7V13H1Z" fill="#6f97c8"/><path d="M13 7H19V13H13ZM7 13H13V19H7Z" fill="#a9c3e2"/><rect x="14.5" y="14.5" width="9.2" height="9.2" rx="1.500" fill="#5f9f66" stroke="#4f8a56" stroke-width="0.700"/><path d="M19.1 16.2V22.0M16.2 19.1H22.0" stroke="#fff" stroke-width="1.900" fill="none"/></svg>
<svg style="left:5.0px;top:282.0px" width="24" height="24" viewBox="0 0 24 24"><rect x="1.500" y="1.500" width="20" height="20" fill="#a9c3e2" stroke="#2f5a95" stroke-width="1"/><path d="M1.500 11.500H21.500M11.500 1.500V21.500M1.500 1.500L11.500 11.500M21.500 1.500L11.500 11.500" stroke="#2f5a95" stroke-width="0.9" fill="none"/><path d="M2 12H11V21H2Z" fill="#6f97c8" opacity="0.8"/><rect x="14.5" y="14.5" width="9.2" height="9.2" rx="1.500" fill="#5f9f66" stroke="#4f8a56" stroke-width="0.700"/><path d="M19.1 16.2V22.0M16.2 19.1H22.0" stroke="#fff" stroke-width="1.900" fill="none"/></svg>
<svg style="left:5.0px;top:312.0px" width="24" height="24" viewBox="0 0 24 24"><path d="M7 3.500C11 2 15 5 14 9.500C13 14 9 17 5 17.500C8 14.500 9.500 12 9.500 10.500C6 11.500 3.500 9 4.500 6C5 4.500 6 3.800 7 3.500Z" fill="#3f6aa3" stroke="#2f5a95" stroke-width="0.5"/><rect x="14.5" y="14.5" width="9.2" height="9.2" rx="1.500" fill="#5f9f66" stroke="#4f8a56" stroke-width="0.700"/><path d="M19.1 16.2V22.0M16.2 19.1H22.0" stroke="#fff" stroke-width="1.900" fill="none"/></svg>
<svg style="left:5.0px;top:342.0px" width="24" height="24" viewBox="0 0 24 24"><path d="M2 23C4 14 8 6 22.500 1.500C23.500 8 17 14 8.500 16C10 13 13 9.500 16.500 6.500C11 9 6 15 3 23Z" fill="#7ba3d4" stroke="#3f6aa3" stroke-width="0.8"/><rect x="14.5" y="14.5" width="9.2" height="9.2" rx="1.500" fill="#5f9f66" stroke="#4f8a56" stroke-width="0.700"/><path d="M19.1 16.2V22.0M16.2 19.1H22.0" stroke="#fff" stroke-width="1.900" fill="none"/></svg>
<svg style="left:5.0px;top:372.0px" width="24" height="24" viewBox="0 0 24 24"><rect x="1.500" y="1.500" width="20" height="20" rx="1.500" fill="#a9c0dc" stroke="#4a6c9c" stroke-width="1.100"/><path d="M4 4L11 18.500L18 4H20" fill="none" stroke="#2a4466" stroke-width="1.100"/><circle cx="4" cy="4" r="1.300" fill="#fff" stroke="#2a4466" stroke-width="0.7"/><circle cx="18" cy="4" r="1.300" fill="#fff" stroke="#2a4466" stroke-width="0.7"/><circle cx="11" cy="18.500" r="1.600" fill="#fff" stroke="#2a4466" stroke-width="0.7"/><rect x="14.5" y="14.5" width="9.2" height="9.2" rx="1.500" fill="#5f9f66" stroke="#4f8a56" stroke-width="0.700"/><path d="M19.1 16.2V22.0M16.2 19.1H22.0" stroke="#fff" stroke-width="1.900" fill="none"/></svg>
<svg style="left:5.0px;top:401.5px" width="24" height="24" viewBox="0 0 24 24"><path d="M3 8C3 3 8 1.500 11 3C14 1.500 19 3 19 8C19 12 17 13 16 16C15.500 19 14 21 12 21C10 21 10 18 10 16C7 16 3 13 3 8Z" fill="#4f7fb8" stroke="#2f5a95" stroke-width="0.9"/><path d="M8 5C7 8 8 11 10 12M14 5C15 8 14 11 13 13" fill="none" stroke="#dfe9f5" stroke-width="1"/><rect x="14.5" y="14.5" width="9.2" height="9.2" rx="1.500" fill="#5f9f66" stroke="#4f8a56" stroke-width="0.700"/><path d="M19.1 16.2V22.0M16.2 19.1H22.0" stroke="#fff" stroke-width="1.900" fill="none"/></svg>
<svg style="left:5.0px;top:431.7px" width="24" height="24" viewBox="0 0 24 24"><circle cx="11.500" cy="11" r="9.800" fill="#b9d0ea" stroke="#3f6aa3" stroke-width="1"/><path d="M1.700 11H21.300M11.500 1.200V20.800M4 5C8 8 15 8 19 5M4 17C8 14 15 14 19 17M11.500 1.200C6 6 6 16 11.500 20.800M11.500 1.200C17 6 17 16 11.500 20.800" fill="none" stroke="#3f6aa3" stroke-width="0.8"/><path d="M5 7C7 5 10 6 10 8C10 10 7 11 6 10ZM13 5C15 5 17 7 16 9C14 9 13 7 13 5Z" fill="#2f5a95"/><rect x="14.5" y="14.5" width="9.2" height="9.2" rx="1.500" fill="#5f9f66" stroke="#4f8a56" stroke-width="0.700"/><path d="M19.1 16.2V22.0M16.2 19.1H22.0" stroke="#fff" stroke-width="1.900" fill="none"/></svg>
<svg style="left:5.0px;top:462.0px" width="24" height="24" viewBox="0 0 24 24"><circle cx="11.500" cy="11" r="9.800" fill="#2f5a95" stroke="#1f3f6b" stroke-width="1"/><path d="M3 7H20V10H3ZM2 13H21V16H2Z" fill="#dfe9f5"/><path d="M11.500 1.200C6 6 6 16 11.500 20.800M11.500 1.200C17 6 17 16 11.500 20.800M11.500 1.200V20.800" fill="none" stroke="#dfe9f5" stroke-width="1"/><rect x="14.5" y="14.5" width="9.2" height="9.2" rx="1.500" fill="#5f9f66" stroke="#4f8a56" stroke-width="0.700"/><path d="M19.1 16.2V22.0M16.2 19.1H22.0" stroke="#fff" stroke-width="1.900" fill="none"/></svg>
<svg style="left:5.0px;top:492.0px" width="24" height="24" viewBox="0 0 24 24"><circle cx="11.500" cy="11" r="9.800" fill="#cfdff0" stroke="#3f6aa3" stroke-width="1"/><path d="M1.700 11H21.300M11.500 1.200V20.800M4 5C8 8 15 8 19 5M4 17C8 14 15 14 19 17M11.500 1.200C6 6 6 16 11.500 20.800M11.500 1.200C17 6 17 16 11.500 20.800" fill="none" stroke="#7ba3d4" stroke-width="0.7"/><path d="M6 6L11 17L16 6" fill="none" stroke="#222" stroke-width="1.100"/><circle cx="6" cy="6" r="1.300" fill="#fff" stroke="#222" stroke-width="0.7"/><circle cx="16" cy="6" r="1.300" fill="#fff" stroke="#222" stroke-width="0.7"/><circle cx="11" cy="17" r="1.300" fill="#fff" stroke="#222" stroke-width="0.7"/><rect x="14.5" y="14.5" width="9.2" height="9.2" rx="1.500" fill="#5f9f66" stroke="#4f8a56" stroke-width="0.700"/><path d="M19.1 16.2V22.0M16.2 19.1H22.0" stroke="#fff" stroke-width="1.900" fill="none"/></svg>
<svg style="left:5.0px;top:522.3px" width="24" height="24" viewBox="0 0 24 24"><path d="M4 4L10 19.500L16.500 4L21 4" fill="none" stroke="#222" stroke-width="1.100"/><circle cx="4" cy="4" r="1.500" fill="#fff" stroke="#222" stroke-width="0.8"/><circle cx="16.500" cy="4" r="1.500" fill="#fff" stroke="#222" stroke-width="0.8"/><circle cx="21.500" cy="4" r="1.500" fill="#fff" stroke="#222" stroke-width="0.8"/><circle cx="10" cy="19.500" r="1.600" fill="#fff" stroke="#222" stroke-width="0.8"/><rect x="14" y="14" width="10" height="10" rx="1.500" fill="#d9b630" stroke="#bf9c20" stroke-width="0.800"/><path d="M19 15.2V22.8M15.2 19H22.8" stroke="#fffef0" stroke-width="1.150" fill="none"/><path d="M16.4 16.4L21.6 21.6M21.6 16.4L16.4 21.6" stroke="#fffef0" stroke-width="0.900" fill="none"/><circle cx="19" cy="19" r="0.700" fill="#d9b630"/></svg>
<svg style="left:12.0px;top:552.7px" width="24" height="24" viewBox="0 0 24 24"><rect x="1.500" y="1.500" width="19" height="19" fill="#6f97c8" stroke="#3f6aa3" stroke-width="1"/><rect x="2" y="2" width="18" height="4.500" fill="#2f5a95"/><path d="M1.500 6.500H20.500M1.500 11H20.500M1.500 15.500H20.500M6.300 1.500V20.500M11 1.500V20.500M15.700 1.500V20.500" stroke="#dfe9f5" stroke-width="0.9"/><rect x="14.5" y="14.5" width="9.2" height="9.2" rx="1.500" fill="#5f9f66" stroke="#4f8a56" stroke-width="0.700"/><path d="M19.1 16.2V22.0M16.2 19.1H22.0" stroke="#fff" stroke-width="1.900" fill="none"/></svg>
<svg style="left:36.5px;top:412px" width="8" height="5" viewBox="0 0 8 5"><path d="M0 0H8L4 4.5Z" fill="#222"/></svg>
<svg style="left:36.5px;top:442.5px" width="8" height="5" viewBox="0 0 8 5"><path d="M0 0H8L4 4.5Z" fill="#222"/></svg>
<svg style="left:36.5px;top:502.3px" width="8" height="5" viewBox="0 0 8 5"><path d="M0 0H8L4 4.5Z" fill="#222"/></svg>
<svg style="left:36.5px;top:532.5px" width="8" height="5" viewBox="0 0 8 5"><path d="M0 0H8L4 4.5Z" fill="#222"/></svg>
<div class="a" style="left:396px;top:207px;width:1524px;height:792px;background:#fff;border-top:1px solid #82858c;border-bottom:1px solid #82858c"></div>
<div class="a" style="left:0px;top:998px;width:397px;height:1px;background:#82858c"></div>
<svg style="left:0;top:0" width="1920" height="998" viewBox="0 0 1920 998"><polygon points="890,212.7 500.7,411 516,606.5 418.5,785.3 569,968 584,994.5 830,928 864,998 890,998 890,827.6 638,844.5 627,834 626,821 680.7,773 731,719.5 819,624 890,595" fill="#f98b0a" stroke="#2a1a05" stroke-width="1.100" stroke-linejoin="miter"/></svg>
<div class="t" style="left:808px;top:831.2px;font-size:10.5px;transform-origin:0 50%;transform:translateY(-50%) scaleX(0.9200);color:#1a1005;">Imleria badia</div>
<div class="t" style="left:823px;top:858.7px;font-size:10.5px;transform-origin:0 50%;transform:translateY(-50%) scaleX(0.9200);color:#1a1005;">Neoboletus erythropus</div>
<div class="t" style="left:720px;top:875.7px;font-size:10.5px;transform-origin:0 50%;transform:translateY(-50%) scaleX(0.9200);color:#1a1005;">Heterobasidion annosum</div>
<div class="t" style="left:851px;top:871.2px;font-size:10.5px;transform-origin:0 50%;transform:translateY(-50%) scaleX(0.9200);color:#1a1005;">Amanita muscaria</div>
<div class="t" style="left:872px;top:888.7px;font-size:10.5px;transform-origin:0 50%;transform:translateY(-50%) scaleX(0.9200);color:#1a1005;">Russula</div>
<div class="t" style="left:831px;top:920.2px;font-size:10.5px;transform-origin:0 50%;transform:translateY(-50%) scaleX(0.9200);color:#1a1005;">Suillus grevillei</div>
<div class="a" style="left:805.8px;top:835px;width:6px;height:6px;border-radius:50%;background:#000"></div>
<div class="a" style="left:819.8px;top:861.6px;width:6px;height:6px;border-radius:50%;background:#000"></div>
<div class="a" style="left:828px;top:873px;width:6px;height:6px;border-radius:50%;background:#000"></div>
<div class="a" style="left:846.6px;top:874px;width:6px;height:6px;border-radius:50%;background:#000"></div>
<div class="a" style="left:867.6px;top:890.6px;width:6px;height:6px;border-radius:50%;background:#000"></div>
<div class="a" style="left:1919px;top:208px;width:1px;height:790px;background:#9a9da3"></div>
<div class="a" style="left:396px;top:207px;width:1px;height:791px;background:#d0d0d0"></div>
<div class="a" style="left:0px;top:999px;width:1920px;height:31px;background:#f0f0f0"></div>
<div class="inp" style="left:4px;top:1004px;width:277px;height:22px;border-color:#7a7a7a"></div>
<svg style="left:13px;top:1008px" width="13" height="14" viewBox="0 0 13 14"><circle cx="5" cy="5" r="3.900" fill="none" stroke="#9a9a9a" stroke-width="1.300"/><path d="M7.800 8L11.500 12.500" stroke="#9a9a9a" stroke-width="1.500" stroke-linecap="round"/></svg>
<div class="t" style="left:33px;top:1015.5px;font-size:14px;transform-origin:0 50%;transform:translateY(-50%) scaleX(0.9214);color:#8a8a8a;">Zu suchender Typ (Strg+K)</div>
<div class="t" style="left:289px;top:1015.5px;font-size:14px;transform-origin:0 50%;transform:translateY(-50%) scaleX(0.9147);color:#111;">Einen Legendeneintrag entfernt.</div>
<div class="t" style="left:1806.5px;top:1015.3px;font-size:13.5px;transform-origin:0 50%;transform:translateY(-50%) scaleX(0.9276);color:#111;">:25832</div>
<svg style="left:1861.5px;top:1004.5px" width="23" height="22" viewBox="0 0 22 22"><path d="M2 9C2 4.500 6 2 11 2C16 2 20 4.500 20 9C20 13 16.500 15.500 13 15.800L15.500 20.500C12 19.500 10 17.500 9.500 15.800C5.500 15.500 2 13 2 9Z" fill="#5a5a5a"/><circle cx="7" cy="9" r="1.400" fill="#fff"/><circle cx="11" cy="9" r="1.400" fill="#fff"/><circle cx="15" cy="9" r="1.400" fill="#fff"/></svg>
<svg style="left:1894px;top:1004px" width="26" height="22" viewBox="0 0 26 22"><path d="M2 8H8C6.500 5 8 3 10.500 3C13 3 14 5 12.800 8H19V12C22 10.500 24 12 24 14C24 16 22 17.500 19 16V20H2Z" fill="#b2b4b2" stroke="#6e6e6e" stroke-width="1"/><path d="M12 2C15 0 19 1 21 3.500L23 2V7.500H17.500L19.300 5.500C18 4 15.500 3 13.500 4Z" fill="#6f756f"/></svg>
<div class="a" style="left:0px;top:1030px;width:1920px;height:3px;background:#1c1c1c"></div>
<div class="a" style="left:1258px;top:1030px;width:58px;height:3px;background:#3a3a3a"></div>
<div class="a" style="left:50px;top:170px;width:346px;height:824px;background:#fff;box-shadow:0 1px 7px 1px rgba(0,0,0,0.32)"></div>
<div class="t" style="left:59.5px;top:188.5px;font-size:17px;transform-origin:0 50%;transform:translateY(-50%) scaleX(0.8583);color:#8c8c8c;">Layer</div>
<div class="a" style="left:370px;top:178px;width:25px;height:25px;background:#ebebeb"></div>
<svg style="left:378px;top:186px" width="9" height="9" viewBox="0 0 9 9"><path d="M1 1L8 8M8 1L1 8" stroke="#fdfdfd" stroke-width="1.400"/></svg>
<div class="a" style="left:50px;top:207px;width:346px;height:27px;background:#f0f0f0"></div>
<svg style="left:55.0px;top:212.0px" width="16" height="16" viewBox="0 0 16 16"><path d="M8 9L14.500 2" stroke="#e0a040" stroke-width="2.400" stroke-linecap="round"/><path d="M2 9L8 6L11 10L6 14Z" fill="#d9534a"/><path d="M2 9L5 7.500L8 11.500L6 14Z" fill="#4a7fc0"/><path d="M3.500 6.500L8 5L10 7.500L5 9Z" fill="#f0d040"/></svg>
<svg style="left:78.0px;top:212.0px" width="16" height="16" viewBox="0 0 16 16"><path d="M1.500 7V15H8" fill="none" stroke="#999" stroke-width="1"/><rect x="3.500" y="4.500" width="8" height="8.500" fill="#f4f4f4" stroke="#777" stroke-width="0.9"/><rect x="6.500" y="2.500" width="8" height="9" fill="#fafafa" stroke="#666" stroke-width="0.9"/><path d="M9 0.500V8.500C9 10 11.500 10 11.500 8.500V3.500" fill="none" stroke="#4a6fa5" stroke-width="0.9"/><circle cx="12.500" cy="13" r="3" fill="#6fc36f" stroke="#4a9a4a" stroke-width="0.600"/><path d="M12.500 11.300V14.700M10.800 13H14.200" stroke="#fff" stroke-width="1"/></svg>
<svg style="left:101.0px;top:212.0px" width="16" height="16" viewBox="0 0 16 16"><path d="M0.500 8C4 3 12 3 15.500 8C12 12.500 4 12.500 0.500 8Z" fill="#eef2f7" stroke="#8a8a8a" stroke-width="0.9"/><path d="M1 6C4 2 11 1.500 15 5" fill="none" stroke="#aaa" stroke-width="0.8"/><circle cx="7.500" cy="7.800" r="2.900" fill="#5b84c0"/><circle cx="7.500" cy="7.800" r="1.300" fill="#1a2a44"/><path d="M9 11.500H16L12.500 15.500Z" fill="#111"/></svg>
<svg style="left:124.0px;top:212.0px" width="16" height="16" viewBox="0 0 16 16"><path d="M1 2.500H15L9.500 9V15.500H6.500V9Z" fill="#6a9fd4" stroke="#4a7fb4" stroke-width="0.700"/><rect x="1" y="1" width="14" height="2.400" fill="#c8d44a"/></svg>
<svg style="left:148.0px;top:212.0px" width="16" height="16" viewBox="0 0 16 16"><text x="0" y="10.500" font-family="Liberation Serif,serif" font-size="19" fill="#7a3f8a">ε</text><path d="M7.500 9.500H15V15.500H7.500Z" fill="#b8b8b8"/><path d="M9.500 11.500H13V15.500H9.500Z" fill="#f0f0f0"/></svg>
<svg style="left:186.0px;top:212.0px" width="16" height="16" viewBox="0 0 16 16"><path d="M2.500 1V14.500M2.500 4.500H5M2.500 11.500H5" stroke="#999" stroke-width="0.9" fill="none"/><rect x="4.500" y="2.500" width="4" height="4" fill="#fbd48a" stroke="#e09a2a" stroke-width="0.9"/><rect x="4.500" y="9.500" width="4" height="4" fill="#fbd48a" stroke="#e09a2a" stroke-width="0.9"/><path d="M10 1H13.500V9H15.800L11.800 15.500L7.800 9H10Z" fill="#5b8cc4" stroke="#3f6aa3" stroke-width="0.600"/></svg>
<svg style="left:209.0px;top:212.0px" width="16" height="16" viewBox="0 0 16 16"><path d="M2.500 2V15M2.500 5.500H5M2.500 12.500H5" stroke="#999" stroke-width="0.9" fill="none"/><rect x="4.500" y="3.500" width="4" height="4" fill="#fbd48a" stroke="#e09a2a" stroke-width="0.9"/><rect x="4.500" y="10.500" width="4" height="4" fill="#fbd48a" stroke="#e09a2a" stroke-width="0.9"/><path d="M10 15H13.500V7H15.800L11.800 0.500L7.800 7H10Z" fill="#5b8cc4" stroke="#3f6aa3" stroke-width="0.600"/></svg>
<svg style="left:231.0px;top:212.0px" width="16" height="16" viewBox="0 0 16 16"><rect x="1.500" y="1.500" width="11" height="11" fill="#fff" stroke="#555" stroke-width="0.9"/><rect x="9.500" y="10.500" width="6" height="4.500" rx="1.200" fill="#e0424a"/><path d="M10.800 12.750H14.200" stroke="#fff" stroke-width="1.200"/></svg>
<svg style="left:169px;top:217px" width="10" height="6" viewBox="0 0 10 6"><path d="M0 0H10L5 5.500Z" fill="#111"/></svg>
<div class="a" style="left:50px;top:233px;width:346px;height:761px;border:1px solid #828790;border-top-color:#8a8e96;background:#fff"></div>
<div class="a" style="left:76px;top:235px;width:319px;height:23px;background:#d9d9d9"></div>
<div class="a" style="left:52px;top:234px;width:343px;height:738px;overflow:hidden"><div class="cb" style="left:27px;top:4px;border-color:#333"></div><svg style="left:27px;top:4px" width="16" height="16" viewBox="0 0 16 16"><path d="M2.700 8.600 L6.300 11.900 L13 4.700" fill="none" stroke="#222" stroke-width="1.350"/></svg><svg style="left:53.8px;top:7.0px" width="10" height="10" viewBox="0 0 10 10"><circle cx="5" cy="5" r="3.300" fill="#173a5e"/></svg><div class="t" style="left:75px;top:12px;font-size:15px;transform-origin:0 50%;transform:translateY(-50%) scaleX(0.9633);font-weight:bold;color:#000;text-decoration:underline;text-underline-offset:2px;">funde_nsg_1983_minus_1937</div><div class="cb" style="left:27px;top:28px;border-color:#333"></div><svg style="left:53.8px;top:31.0px" width="10" height="10" viewBox="0 0 10 10"><circle cx="5" cy="5" r="3.300" fill="#000"/></svg><div class="t" style="left:75px;top:36px;font-size:15px;transform-origin:0 50%;transform:translateY(-50%) scaleX(0.9746);font-weight:bold;font-style:italic;color:#777;">Funde_WT_2017_2019</div><svg style="left:8px;top:54.5px" width="8" height="12" viewBox="0 0 8 12"><path d="M1.200 0.800L6.300 6L1.200 11.200" fill="none" stroke="#a4a4a4" stroke-width="1.900"/></svg><div class="cb" style="left:27px;top:52px;border-color:#333"></div><svg style="left:49.5px;top:50.3px" width="18" height="18" viewBox="0 0 18 18"><path d="M0.600 12.100V17.300H8.500" fill="none" stroke="#a8a8a8" stroke-width="1.100"/><rect x="6.100" y="2.400" width="11" height="10.600" fill="#f3f5f8" stroke="#9a9a9a" stroke-width="0.900"/><rect x="3.800" y="5.100" width="10.500" height="10.300" fill="#eef2f6" stroke="#858585" stroke-width="1"/><path d="M8.700 6.500V10.800C8.700 13.200 11.800 13.200 11.800 10.800V2C11.800 -0.100 9.400 -0.100 9.400 2V3" fill="none" stroke="#4f6f90" stroke-width="1.050"/></svg><div class="t" style="left:75px;top:60px;font-size:15px;transform-origin:0 50%;transform:translateY(-50%) scaleX(0.9072);color:#000;">Strasse_Wege</div><svg style="left:8px;top:78.5px" width="8" height="12" viewBox="0 0 8 12"><path d="M1.200 0.800L6.300 6L1.200 11.200" fill="none" stroke="#a4a4a4" stroke-width="1.900"/></svg><div class="cb" style="left:27px;top:76px;border-color:#333"></div><svg style="left:27px;top:76px" width="16" height="16" viewBox="0 0 16 16"><path d="M2.700 8.600 L6.300 11.900 L13 4.700" fill="none" stroke="#222" stroke-width="1.350"/></svg><svg style="left:49.5px;top:74.3px" width="18" height="18" viewBox="0 0 18 18"><path d="M0.600 12.100V17.300H8.500" fill="none" stroke="#a8a8a8" stroke-width="1.100"/><rect x="6.100" y="2.400" width="11" height="10.600" fill="#f3f5f8" stroke="#9a9a9a" stroke-width="0.900"/><rect x="3.800" y="5.100" width="10.500" height="10.300" fill="#eef2f6" stroke="#858585" stroke-width="1"/><path d="M8.700 6.500V10.800C8.700 13.200 11.800 13.200 11.800 10.800V2C11.800 -0.100 9.400 -0.100 9.400 2V3" fill="none" stroke="#4f6f90" stroke-width="1.050"/></svg><div class="t" style="left:75px;top:84px;font-size:15px;transform-origin:0 50%;transform:translateY(-50%) scaleX(0.9043);color:#000;">NSG_1937_und_1983</div><svg style="left:8px;top:102.5px" width="8" height="12" viewBox="0 0 8 12"><path d="M1.200 0.800L6.300 6L1.200 11.200" fill="none" stroke="#a4a4a4" stroke-width="1.900"/></svg><div class="cb" style="left:27px;top:100px;border-color:#333"></div><svg style="left:49.5px;top:98.3px" width="18" height="18" viewBox="0 0 18 18"><path d="M0.600 12.100V17.300H8.500" fill="none" stroke="#a8a8a8" stroke-width="1.100"/><rect x="6.100" y="2.400" width="11" height="10.600" fill="#f3f5f8" stroke="#9a9a9a" stroke-width="0.900"/><rect x="3.800" y="5.100" width="10.500" height="10.300" fill="#eef2f6" stroke="#858585" stroke-width="1"/><path d="M8.700 6.500V10.800C8.700 13.200 11.800 13.200 11.800 10.800V2C11.800 -0.100 9.400 -0.100 9.400 2V3" fill="none" stroke="#4f6f90" stroke-width="1.050"/></svg><div class="t" style="left:75px;top:108px;font-size:15px;transform-origin:0 50%;transform:translateY(-50%) scaleX(0.9659);color:#000;">Pflanzengesellschaften</div><svg style="left:8px;top:126.5px" width="8" height="12" viewBox="0 0 8 12"><path d="M1.200 0.800L6.300 6L1.200 11.200" fill="none" stroke="#a4a4a4" stroke-width="1.900"/></svg><div class="cb" style="left:27px;top:124px;border-color:#333"></div><svg style="left:49.5px;top:122.30000000000001px" width="18" height="18" viewBox="0 0 18 18"><path d="M0.600 12.100V17.300H8.500" fill="none" stroke="#a8a8a8" stroke-width="1.100"/><rect x="6.100" y="2.400" width="11" height="10.600" fill="#f3f5f8" stroke="#9a9a9a" stroke-width="0.900"/><rect x="3.800" y="5.100" width="10.500" height="10.300" fill="#eef2f6" stroke="#858585" stroke-width="1"/><path d="M8.700 6.500V10.800C8.700 13.200 11.800 13.200 11.800 10.800V2C11.800 -0.100 9.400 -0.100 9.400 2V3" fill="none" stroke="#4f6f90" stroke-width="1.050"/></svg><div class="t" style="left:75px;top:132px;font-size:15px;transform-origin:0 50%;transform:translateY(-50%) scaleX(1.0222);color:#000;">Biotope</div><svg style="left:8px;top:150.5px" width="8" height="12" viewBox="0 0 8 12"><path d="M1.200 0.800L6.300 6L1.200 11.200" fill="none" stroke="#a4a4a4" stroke-width="1.900"/></svg><div class="cb" style="left:27px;top:148px;border-color:#333"></div><svg style="left:49.5px;top:146.3px" width="18" height="18" viewBox="0 0 18 18"><path d="M0.600 12.100V17.300H8.500" fill="none" stroke="#a8a8a8" stroke-width="1.100"/><rect x="6.100" y="2.400" width="11" height="10.600" fill="#f3f5f8" stroke="#9a9a9a" stroke-width="0.900"/><rect x="3.800" y="5.100" width="10.500" height="10.300" fill="#eef2f6" stroke="#858585" stroke-width="1"/><path d="M8.700 6.500V10.800C8.700 13.200 11.800 13.200 11.800 10.800V2C11.800 -0.100 9.400 -0.100 9.400 2V3" fill="none" stroke="#4f6f90" stroke-width="1.050"/></svg><div class="t" style="left:75px;top:156px;font-size:15px;transform-origin:0 50%;transform:translateY(-50%) scaleX(0.9854);color:#000;">Baumfreie_offene_Moorbereiche</div><svg style="left:8px;top:174.5px" width="8" height="12" viewBox="0 0 8 12"><path d="M1.200 0.800L6.300 6L1.200 11.200" fill="none" stroke="#a4a4a4" stroke-width="1.900"/></svg><div class="cb" style="left:27px;top:172px;border-color:#333"></div><svg style="left:49.5px;top:170.3px" width="18" height="18" viewBox="0 0 18 18"><path d="M0.600 12.100V17.300H8.500" fill="none" stroke="#a8a8a8" stroke-width="1.100"/><rect x="6.100" y="2.400" width="11" height="10.600" fill="#f3f5f8" stroke="#9a9a9a" stroke-width="0.900"/><rect x="3.800" y="5.100" width="10.500" height="10.300" fill="#eef2f6" stroke="#858585" stroke-width="1"/><path d="M8.700 6.500V10.800C8.700 13.200 11.800 13.200 11.800 10.800V2C11.800 -0.100 9.400 -0.100 9.400 2V3" fill="none" stroke="#4f6f90" stroke-width="1.050"/></svg><div class="t" style="left:75px;top:180px;font-size:15px;transform-origin:0 50%;transform:translateY(-50%) scaleX(0.9190);color:#000;">Feuchte_und_nasse_Bereiche</div><svg style="left:8px;top:198.5px" width="8" height="12" viewBox="0 0 8 12"><path d="M1.200 0.800L6.300 6L1.200 11.200" fill="none" stroke="#a4a4a4" stroke-width="1.900"/></svg><div class="cb" style="left:27px;top:196px;border-color:#333"></div><svg style="left:49.0px;top:195.7px" width="20" height="14" viewBox="0 0 20 14"><path d="M1 7.500C0.300 2.500 3.500 0.800 7 2.300C9.500 3.400 11 3.300 13.500 2C17 0.300 19.600 2.500 19 7.500C18.500 11.500 15.500 12.500 13 10.800C11 9.500 9.500 9.600 7.500 11.200C4.500 13.500 1.500 12 1 7.500Z" fill="#e3e3e3" stroke="#8e8e8e" stroke-width="1"/></svg><div class="t" style="left:75px;top:204px;font-size:15px;transform-origin:0 50%;transform:translateY(-50%) scaleX(0.9839);font-weight:bold;font-style:italic;color:#777;">Bodenarten</div><div class="cb" style="left:27px;top:220px;border-color:#333"></div><svg style="left:51.5px;top:220.0px" width="16" height="16" viewBox="0 0 16 16"><rect x="0" y="0" width="16" height="16" fill="#dbe6f3"/><path d="M0 0H5.300V5.300H0ZM10.700 0H16V5.300H10.700ZM5.300 5.300H10.700V10.700H5.300ZM0 10.700H5.300V16H0Z" fill="#1f3a5f"/><path d="M5.300 0H10.700V5.300H5.300ZM0 5.300H5.300V10.700H0Z" fill="#7fa3cf"/><path d="M10.700 5.300H16V10.700H10.700ZM5.300 10.700H10.700V16H5.300ZM10.700 10.700H16V16H10.700Z" fill="#b5cbe6"/></svg><div class="t" style="left:75px;top:228px;font-size:15px;transform-origin:0 50%;transform:translateY(-50%) scaleX(0.9652);font-weight:bold;font-style:italic;color:#777;">WT_DGM1_rast</div><div class="cb" style="left:27px;top:244px;border-color:#333"></div><svg style="left:53.0px;top:245.8px" width="12" height="12" viewBox="0 0 12 12"><circle cx="6" cy="6" r="4.700" fill="#f7a11f" stroke="#4a3410" stroke-width="1"/></svg><div class="t" style="left:75px;top:252px;font-size:15px;transform-origin:0 50%;transform:translateY(-50%) scaleX(0.9566);font-weight:bold;font-style:italic;color:#777;">WT_DGM1_gpkg</div><div class="cb" style="left:27px;top:268px;border-color:#333"></div><svg style="left:53.0px;top:269.8px" width="12" height="12" viewBox="0 0 12 12"><circle cx="6" cy="6" r="4.700" fill="#c2474c" stroke="#5a2326" stroke-width="1"/></svg><div class="t" style="left:75px;top:276px;font-size:15px;transform-origin:0 50%;transform:translateY(-50%) scaleX(0.9579);font-weight:bold;font-style:italic;color:#777;">WT_DGM1_xyz</div><svg style="left:27.799999999999997px;top:290.2px" width="17" height="19" viewBox="0 0 17 19"><rect x="0.500" y="0.500" width="16" height="18" rx="2" fill="#ececec" stroke="#a2a2a2" stroke-width="1"/><path d="M1 4.500H16" stroke="#c4c4c4" stroke-width="0.800"/><path d="M2.500 2.700H6M8 2.700H14.500M2.500 7H5.500M7.500 7H14.500M2.500 10.500H5.500M7.500 10.500H14.500M2.500 14H5.500M7.500 14H14.500M2.500 16.800H5.500M7.500 16.800H14.500" stroke="#b2b2b2" stroke-width="1.300"/></svg><div class="t" style="left:53px;top:300px;font-size:15px;transform-origin:0 50%;transform:translateY(-50%) scaleX(0.9808);font-weight:bold;color:#000;">Funde_WT_2017_2019</div><svg style="left:8px;top:318.5px" width="8" height="12" viewBox="0 0 8 12"><path d="M1.200 0.800L6.300 6L1.200 11.200" fill="none" stroke="#a4a4a4" stroke-width="1.900"/></svg><div class="cb" style="left:27px;top:316px;border-color:#333"></div><svg style="left:51.5px;top:316.0px" width="16" height="16" viewBox="0 0 16 16"><rect x="0" y="0" width="16" height="16" fill="#dbe6f3"/><path d="M0 0H5.300V5.300H0ZM10.700 0H16V5.300H10.700ZM5.300 5.300H10.700V10.700H5.300ZM0 10.700H5.300V16H0Z" fill="#1f3a5f"/><path d="M5.300 0H10.700V5.300H5.300ZM0 5.300H5.300V10.700H0Z" fill="#7fa3cf"/><path d="M10.700 5.300H16V10.700H10.700ZM5.300 10.700H10.700V16H5.300ZM10.700 10.700H16V16H10.700Z" fill="#b5cbe6"/></svg><div class="t" style="left:75px;top:324px;font-size:15px;transform-origin:0 50%;transform:translateY(-50%) scaleX(0.9943);font-weight:bold;font-style:italic;color:#777;">OpenStreetMap Standard</div><svg style="left:8px;top:342.5px" width="8" height="12" viewBox="0 0 8 12"><path d="M1.200 0.800L6.300 6L1.200 11.200" fill="none" stroke="#a4a4a4" stroke-width="1.900"/></svg><div class="cb" style="left:27px;top:340px;border-color:#333"></div><svg style="left:51.5px;top:340.0px" width="16" height="16" viewBox="0 0 16 16"><rect x="0" y="0" width="16" height="16" fill="#dbe6f3"/><path d="M0 0H5.300V5.300H0ZM10.700 0H16V5.300H10.700ZM5.300 5.300H10.700V10.700H5.300ZM0 10.700H5.300V16H0Z" fill="#1f3a5f"/><path d="M5.300 0H10.700V5.300H5.300ZM0 5.300H5.300V10.700H0Z" fill="#7fa3cf"/><path d="M10.700 5.300H16V10.700H10.700ZM5.300 10.700H10.700V16H5.300ZM10.700 10.700H16V16H10.700Z" fill="#b5cbe6"/></svg><div class="t" style="left:75px;top:348px;font-size:15px;transform-origin:0 50%;transform:translateY(-50%) scaleX(0.9750);font-weight:bold;font-style:italic;color:#777;">WMS LGRB-BW BK50: Bodenkarte 1 : 50 000</div><svg style="left:8px;top:366.5px" width="8" height="12" viewBox="0 0 8 12"><path d="M1.200 0.800L6.300 6L1.200 11.200" fill="none" stroke="#a4a4a4" stroke-width="1.900"/></svg><div class="cb" style="left:27px;top:364px;border-color:#333"></div><svg style="left:51.5px;top:364.0px" width="16" height="16" viewBox="0 0 16 16"><rect x="0" y="0" width="16" height="16" fill="#dbe6f3"/><path d="M0 0H5.300V5.300H0ZM10.700 0H16V5.300H10.700ZM5.300 5.300H10.700V10.700H5.300ZM0 10.700H5.300V16H0Z" fill="#1f3a5f"/><path d="M5.300 0H10.700V5.300H5.300ZM0 5.300H5.300V10.700H0Z" fill="#7fa3cf"/><path d="M10.700 5.300H16V10.700H10.700ZM5.300 10.700H10.700V16H5.300ZM10.700 10.700H16V16H10.700Z" fill="#b5cbe6"/></svg><div class="t" style="left:75px;top:372px;font-size:15px;transform-origin:0 50%;transform:translateY(-50%) scaleX(0.9750);font-weight:bold;font-style:italic;color:#777;">WMS LGRB-BW GK50: Geologische Karte</div></div>
<div class="a" style="left:52px;top:972px;width:343px;height:21px;background:#f0f0f0"></div>
<div class="a" style="left:72px;top:972px;width:205px;height:21px;background:#cdcdcd"></div>
<svg style="left:57px;top:977px" width="8" height="11" viewBox="0 0 8 11"><path d="M6.500 0.800L1.500 5.500L6.500 10.200" fill="none" stroke="#444" stroke-width="1.700"/></svg>
<svg style="left:380px;top:977px" width="8" height="11" viewBox="0 0 8 11"><path d="M1.500 0.800L6.500 5.500L1.500 10.200" fill="none" stroke="#444" stroke-width="1.700"/></svg>
<div class="a" style="left:886px;top:0px;width:919px;height:1027px;background:#f0f0f0;border:1px solid #6b6b6b;border-top:1px solid #555;box-shadow:0 2px 14px 1px rgba(0,0,0,0.30)"></div>
<div class="a" style="left:887px;top:1px;width:917px;height:37px;background:#fff"></div>
<svg style="left:896px;top:9.5px" width="19.5" height="19.5" viewBox="0 0 20 20"><circle cx="9.300" cy="9.300" r="7.300" fill="#fff" stroke="#74a238" stroke-width="3.400"/><path d="M9.500 12L12.600 8.900L19.900 15.200V19.800H16.900Z" fill="#5f9a33"/><path d="M11.600 10.200L19.500 17.300" stroke="#a3d05c" stroke-width="0.900" fill="none"/><circle cx="9.700" cy="9.500" r="2.100" fill="#e58a2e"/><circle cx="10.900" cy="10.700" r="0.900" fill="#eed060"/></svg>
<div class="t" style="left:921px;top:20px;font-size:16px;transform-origin:0 50%;transform:translateY(-50%) scaleX(0.9631);color:#000;">Vektorlayer speichern als...</div>
<svg style="left:1776px;top:13px" width="13" height="13" viewBox="0 0 13 13"><path d="M0.700 0.700L12.300 12.300M12.300 0.700L0.700 12.300" stroke="#111" stroke-width="1.300"/></svg>
<div class="t" style="left:911px;top:73.0px;font-size:14px;transform-origin:0 50%;transform:translateY(-50%) scaleX(0.9246);color:#000;">Format</div>
<div class="combo" style="left:981px;top:63px;width:799px;height:21px;"></div>
<div class="t" style="left:985px;top:73.0px;font-size:14px;transform-origin:0 50%;transform:translateY(-50%) scaleX(0.9302);color:#000;">Komma-getrennte Werte [CSV]</div>
<svg style="left:1763.0px;top:71.5px" width="10" height="5" viewBox="0 0 10 5"><path d="M0.5 0.3 L5.0 4.5 L9.5 0.3" fill="none" stroke="#333" stroke-width="1.2"/></svg>
<div class="t" style="left:911px;top:102.0px;font-size:14px;transform-origin:0 50%;transform:translateY(-50%) scaleX(0.9009);color:#000;">Dateiname</div>
<div class="inp" style="left:981px;top:92px;width:766px;height:21px;"></div>
<div class="t" style="left:984px;top:102.0px;font-size:14px;transform-origin:0 50%;transform:translateY(-50%) scaleX(0.9120);color:#000;">D:\Sci\_QGIS für Pilzfreunde\csv_exporte\funde_nsg_1983_minus_1937.csv</div>
<svg style="left:1725px;top:97px" width="13" height="10" viewBox="0 0 13 10"><path d="M0.500 5L4.500 0.500H12.500V9.500H4.500Z" fill="#b4b4b4"/><path d="M6.300 3L10.300 7M10.300 3L6.300 7" stroke="#fff" stroke-width="1.300"/></svg>
<div class="btn" style="left:1755px;top:93px;width:24px;height:19px;"></div>
<div class="t" style="left:1767px;top:100.5px;font-size:15px;transform-origin:50% 50%;transform:translate(-50%,-50%) scaleX(1.0000);font-weight:bold;">...</div>
<div class="t" style="left:911px;top:131.0px;font-size:14px;transform-origin:0 50%;transform:translateY(-50%) scaleX(0.8994);color:#000;">Layername</div>
<div class="dinp" style="left:981px;top:121px;width:799px;height:21px;"></div>
<div class="t" style="left:911px;top:162.0px;font-size:14px;transform-origin:0 50%;transform:translateY(-50%) scaleX(0.7853);color:#000;">KBS</div>
<div class="combo" style="left:981px;top:149px;width:766px;height:26px;"></div>
<div class="t" style="left:985px;top:162.0px;font-size:14px;transform-origin:0 50%;transform:translateY(-50%) scaleX(0.8758);color:#000;">EPSG:4326 - WGS 84</div>
<svg style="left:1730.0px;top:160.5px" width="10" height="5" viewBox="0 0 10 5"><path d="M0.5 0.3 L5.0 4.5 L9.5 0.3" fill="none" stroke="#333" stroke-width="1.2"/></svg>
<div class="btn" style="left:1754px;top:150px;width:25px;height:24px;"></div>
<svg style="left:1757px;top:152px" width="20" height="20" viewBox="0 0 20 20"><circle cx="9" cy="9" r="7.500" fill="#c9dcf0" stroke="#777" stroke-width="0.8"/><path d="M1.500 9H16.500M9 1.500V16.500M3 5C6 7 12 7 15 5M3 13C6 11 12 11 15 13M9 1.500C5 5 5 13 9 16.500M9 1.500C13 5 13 13 9 16.500" fill="none" stroke="#777" stroke-width="0.600"/><path d="M2 6C4 1 14 1 16 6" fill="none" stroke="#555" stroke-width="1.200"/><rect x="10.500" y="10.500" width="8.500" height="8.500" rx="1" fill="#e9c442" stroke="#c8a52c" stroke-width="0.700"/><path d="M12.500 17L17 12.500" stroke="#fff" stroke-width="1.800"/></svg>
<div class="a" style="left:900px;top:194px;width:891px;height:784px;border:1px solid #828790"></div>
<div class="a" style="left:1770px;top:195px;width:20px;height:782px;background:#f0f0f0"></div>
<div class="a" style="left:1770px;top:215px;width:20px;height:571px;background:#cdcdcd"></div>
<svg style="left:1774px;top:201px" width="11" height="8" viewBox="0 0 11 8"><path d="M1 6.500L5.500 1.800L10 6.500" fill="none" stroke="#444" stroke-width="1.700"/></svg>
<svg style="left:1774px;top:962px" width="11" height="8" viewBox="0 0 11 8"><path d="M1 1.500L5.500 6.200L10 1.500" fill="none" stroke="#444" stroke-width="1.700"/></svg>
<div class="t" style="left:912px;top:216.5px;font-size:14px;transform-origin:0 50%;transform:translateY(-50%) scaleX(0.8929);color:#000;">Kodierung</div>
<div class="combo" style="left:1339px;top:205px;width:419px;height:22px;"></div>
<div class="t" style="left:1343px;top:216.0px;font-size:14px;transform-origin:0 50%;transform:translateY(-50%) scaleX(0.8824);color:#000;">UTF-8</div>
<svg style="left:1741.0px;top:214.5px" width="10" height="5" viewBox="0 0 10 5"><path d="M0.5 0.3 L5.0 4.5 L9.5 0.3" fill="none" stroke="#333" stroke-width="1.2"/></svg>
<div class="cbd" style="left:912px;top:236px;width:16px;height:16px;"></div>
<div class="t" style="left:934px;top:244.5px;font-size:14px;transform-origin:0 50%;transform:translateY(-50%) scaleX(0.9135);color:#838383;">Nur gewählte Objekte speichern</div>
<div class="a" style="left:912px;top:270px;width:846px;height:292px;border:1px solid #dcdcdc"></div>
<div class="a" style="left:911px;top:262px;width:368px;height:16px;background:#f0f0f0"></div>
<svg style="left:915px;top:267px" width="11" height="7" viewBox="0 0 11 7"><path d="M0 0H11L5.500 7Z" fill="#222"/></svg>
<div class="t" style="left:934px;top:270.5px;font-size:14px;transform-origin:0 50%;transform:translateY(-50%) scaleX(0.9591);font-weight:bold;color:#000;">Felder zum Export und deren Exportoptionen wählen</div>
<div class="a" style="left:924px;top:289px;width:822px;height:200px;background:#fff;border:1px solid #828790"></div>
<div class="a" style="left:1031px;top:290px;width:1px;height:198px;background:#d8d8d8"></div>
<div class="a" style="left:1101px;top:290px;width:1px;height:198px;background:#d8d8d8"></div>
<div class="a" style="left:1343px;top:290px;width:1px;height:198px;background:#d8d8d8"></div>
<div class="a" style="left:925px;top:320px;width:418px;height:1px;background:#f6f6f6"></div>
<div class="a" style="left:925px;top:356px;width:418px;height:1px;background:#d8d8d8"></div>
<div class="a" style="left:925px;top:393px;width:418px;height:1px;background:#d8d8d8"></div>
<div class="a" style="left:925px;top:430px;width:418px;height:1px;background:#d8d8d8"></div>
<div class="a" style="left:925px;top:467px;width:418px;height:1px;background:#d8d8d8"></div>
<div class="t" style="left:978px;top:306px;font-size:15.5px;transform-origin:50% 50%;transform:translate(-50%,-50%) scaleX(0.9674);">Name</div>
<div class="t" style="left:1066px;top:306px;font-size:15.5px;transform-origin:50% 50%;transform:translate(-50%,-50%) scaleX(0.9206);">Typ</div>
<div class="t" style="left:1223px;top:306px;font-size:15.5px;transform-origin:50% 50%;transform:translate(-50%,-50%) scaleX(0.9596);">Mit angezeigten Werten ersetzen</div>
<div class="a" style="left:925px;top:290px;width:800px;height:198px;overflow:hidden"><div class="cb" style="left:3px;top:40.5px;border-color:#333"></div><svg style="left:3px;top:40.5px" width="16" height="16" viewBox="0 0 16 16"><path d="M2.700 8.600 L6.300 11.900 L13 4.700" fill="none" stroke="#222" stroke-width="1.350"/></svg><div class="t" style="left:25.5px;top:48.5px;font-size:15.5px;transform-origin:0 50%;transform:translateY(-50%) scaleX(0.9947);">id</div><div class="t" style="left:110px;top:48.5px;font-size:15.5px;transform-origin:0 50%;transform:translateY(-50%) scaleX(0.9385);">String</div><div class="cb" style="left:3px;top:77.5px;border-color:#333"></div><svg style="left:3px;top:77.5px" width="16" height="16" viewBox="0 0 16 16"><path d="M2.700 8.600 L6.300 11.900 L13 4.700" fill="none" stroke="#222" stroke-width="1.350"/></svg><div class="t" style="left:25.5px;top:85.5px;font-size:15.5px;transform-origin:0 50%;transform:translateY(-50%) scaleX(0.9829);">funddatum</div><div class="t" style="left:110px;top:85.5px;font-size:15.5px;transform-origin:0 50%;transform:translateY(-50%) scaleX(0.9468);">Date</div><div class="cb" style="left:3px;top:114.5px;border-color:#333"></div><svg style="left:3px;top:114.5px" width="16" height="16" viewBox="0 0 16 16"><path d="M2.700 8.600 L6.300 11.900 L13 4.700" fill="none" stroke="#222" stroke-width="1.350"/></svg><div class="t" style="left:25.5px;top:122.5px;font-size:15.5px;transform-origin:0 50%;transform:translateY(-50%) scaleX(0.9672);">artname</div><div class="t" style="left:110px;top:122.5px;font-size:15.5px;transform-origin:0 50%;transform:translateY(-50%) scaleX(0.9385);">String</div><div class="cb" style="left:3px;top:151.5px;border-color:#333"></div><svg style="left:3px;top:151.5px" width="16" height="16" viewBox="0 0 16 16"><path d="M2.700 8.600 L6.300 11.900 L13 4.700" fill="none" stroke="#222" stroke-width="1.350"/></svg><div class="t" style="left:25.5px;top:159.5px;font-size:15.5px;transform-origin:0 50%;transform:translateY(-50%) scaleX(0.9861);">gattung</div><div class="t" style="left:110px;top:159.5px;font-size:15.5px;transform-origin:0 50%;transform:translateY(-50%) scaleX(0.9385);">String</div><div class="cb" style="left:3px;top:188.5px;border-color:#333"></div><svg style="left:3px;top:188.5px" width="16" height="16" viewBox="0 0 16 16"><path d="M2.700 8.600 L6.300 11.900 L13 4.700" fill="none" stroke="#222" stroke-width="1.350"/></svg><div class="t" style="left:25.5px;top:196.5px;font-size:15.5px;transform-origin:0 50%;transform:translateY(-50%) scaleX(1.0099);">epithet</div><div class="t" style="left:110px;top:196.5px;font-size:15.5px;transform-origin:0 50%;transform:translateY(-50%) scaleX(0.9385);">String</div><div class="cb" style="left:180px;top:77.5px;border-color:#333"></div><div class="t" style="left:202px;top:85.5px;font-size:15.5px;transform-origin:0 50%;transform:translateY(-50%) scaleX(0.9869);">Datum/Zeit benutzen</div></div>
<div class="a" style="left:1724px;top:290px;width:21px;height:198px;background:#f0f0f0"></div>
<div class="a" style="left:1724px;top:311px;width:21px;height:21px;background:#cdcdcd"></div>
<svg style="left:1729px;top:297px" width="11" height="8" viewBox="0 0 11 8"><path d="M1 6.500L5.500 1.800L10 6.500" fill="none" stroke="#444" stroke-width="1.700"/></svg>
<svg style="left:1729px;top:473px" width="11" height="8" viewBox="0 0 11 8"><path d="M1 1.500L5.500 6.200L10 1.500" fill="none" stroke="#444" stroke-width="1.700"/></svg>
<div class="btn" style="left:925px;top:497px;width:406px;height:26px;"></div>
<div class="t" style="left:1128px;top:510.0px;font-size:14px;transform-origin:50% 50%;transform:translate(-50%,-50%) scaleX(0.9150);color:#000;">Alle wählen</div>
<div class="btn" style="left:1340px;top:497px;width:405px;height:26px;"></div>
<div class="t" style="left:1543px;top:510.0px;font-size:14px;transform-origin:50% 50%;transform:translate(-50%,-50%) scaleX(0.9150);color:#000;">Alle abwählen</div>
<div class="cb" style="left:924px;top:533px;width:16px;height:16px;"></div>
<div class="t" style="left:946px;top:541.0px;font-size:14px;transform-origin:0 50%;transform:translateY(-50%) scaleX(0.9283);color:#000;">Alle gewählten Feldrohwerte durch Anzeigewert ersetzen</div>
<svg style="left:918px;top:573px" width="7" height="11" viewBox="0 0 7 11"><path d="M0 0V11L7 5.500Z" fill="#222"/></svg>
<div class="t" style="left:934px;top:579.0px;font-size:14px;transform-origin:0 50%;transform:translateY(-50%) scaleX(0.9530);font-weight:bold;color:#000;">Geometrie</div>
<div class="a" style="left:912px;top:607px;width:846px;height:146px;border:1px solid #dcdcdc"></div>
<div class="a" style="left:911px;top:598px;width:236px;height:18px;background:#f0f0f0"></div>
<svg style="left:915px;top:604px" width="11" height="7" viewBox="0 0 11 7"><path d="M0 0H11L5.500 7Z" fill="#222"/></svg>
<div class="cb" style="left:932px;top:599px;width:16px;height:16px;"></div>
<div class="t" style="left:957px;top:608.0px;font-size:14px;transform-origin:0 50%;transform:translateY(-50%) scaleX(0.9761);font-weight:bold;color:#000;">Ausdehnung (aktuell: keine)</div>
<div class="t" style="left:1216.5px;top:638.0px;font-size:14px;transform-origin:100% 50%;transform:translate(-100%,-50%) scaleX(0.9150);color:#838383;">Nord</div>
<div class="dinp" style="left:1224px;top:627px;width:258px;height:22px;"></div>
<div class="t" style="left:1227px;top:638.0px;font-size:14px;transform-origin:0 50%;transform:translateY(-50%) scaleX(0.9045);color:#838383;">48.733670000</div>
<div class="t" style="left:924px;top:667.0px;font-size:14px;transform-origin:0 50%;transform:translateY(-50%) scaleX(0.9165);color:#838383;">West</div>
<div class="dinp" style="left:960px;top:656px;width:257px;height:22px;"></div>
<div class="t" style="left:963px;top:667.0px;font-size:14px;transform-origin:0 50%;transform:translateY(-50%) scaleX(0.9051);color:#838383;">8.641410000</div>
<div class="t" style="left:1463px;top:667.0px;font-size:14px;transform-origin:0 50%;transform:translateY(-50%) scaleX(0.8723);color:#838383;">Ost</div>
<div class="dinp" style="left:1489px;top:656px;width:257px;height:22px;"></div>
<div class="t" style="left:1492px;top:667.0px;font-size:14px;transform-origin:0 50%;transform:translateY(-50%) scaleX(0.9051);color:#838383;">8.651630000</div>
<div class="t" style="left:1216.5px;top:696.0px;font-size:14px;transform-origin:100% 50%;transform:translate(-100%,-50%) scaleX(0.9150);color:#838383;">Süd</div>
<div class="dinp" style="left:1224px;top:685px;width:258px;height:22px;"></div>
<div class="t" style="left:1227px;top:696.0px;font-size:14px;transform-origin:0 50%;transform:translateY(-50%) scaleX(0.9045);color:#838383;">48.728500000</div>
<div class="dbtn" style="left:925px;top:715px;width:197px;height:26px;"></div>
<div class="t" style="left:928px;top:728.0px;font-size:14px;transform-origin:0 50%;transform:translateY(-50%) scaleX(0.9007);color:#838383;">Ausdehnung des aktuellen Layers</div>
<div class="dbtn" style="left:1227px;top:715px;width:142px;height:26px;"></div>
<div class="t" style="left:1230px;top:728.0px;font-size:14px;transform-origin:0 50%;transform:translateY(-50%) scaleX(0.9016);color:#838383;">Aus Layer berechnen</div>
<svg style="left:1354px;top:726px" width="8" height="5" viewBox="0 0 8 5"><path d="M0 0H8L4 4.500Z" fill="#9a9a9a"/><path d="M8 0L4 4.500" stroke="#fff" stroke-width="0.800"/></svg>
<div class="dbtn" style="left:1473px;top:715px;width:176px;height:26px;"></div>
<div class="t" style="left:1476px;top:728.0px;font-size:14px;transform-origin:0 50%;transform:translateY(-50%) scaleX(0.8971);color:#838383;">Kartenausschnittsausdehnung</div>
<div class="a" style="left:912px;top:770px;width:846px;height:197px;border:1px solid #dcdcdc"></div>
<div class="a" style="left:911px;top:762px;width:125px;height:16px;background:#f0f0f0"></div>
<svg style="left:915px;top:767px" width="11" height="7" viewBox="0 0 11 7"><path d="M0 0H11L5.500 7Z" fill="#222"/></svg>
<div class="t" style="left:934px;top:770.5px;font-size:14px;transform-origin:0 50%;transform:translateY(-50%) scaleX(0.9744);font-weight:bold;color:#000;">Layeroptionen</div>
<div class="t" style="left:924px;top:800.0px;font-size:14px;transform-origin:0 50%;transform:translateY(-50%) scaleX(0.8327);color:#000;">CREATE_CSVT</div>
<div class="combo" style="left:1036px;top:789px;width:710px;height:22px;"></div>
<div class="t" style="left:1040px;top:800.0px;font-size:14px;transform-origin:0 50%;transform:translateY(-50%) scaleX(0.8094);color:#000;">NO</div>
<svg style="left:1729.0px;top:798.0px" width="10" height="5" viewBox="0 0 10 5"><path d="M0.5 0.3 L5.0 4.5 L9.5 0.3" fill="none" stroke="#333" stroke-width="1.2"/></svg>
<div class="t" style="left:924px;top:829.0px;font-size:14px;transform-origin:0 50%;transform:translateY(-50%) scaleX(0.8013);color:#000;">GEOMETRY</div>
<div class="combo" style="left:1036px;top:818px;width:710px;height:22px;"></div>
<div class="t" style="left:1040px;top:829.0px;font-size:14px;transform-origin:0 50%;transform:translateY(-50%) scaleX(0.9487);color:#000;">&lt;Vorgabe&gt;</div>
<svg style="left:1729.0px;top:827.0px" width="10" height="5" viewBox="0 0 10 5"><path d="M0.5 0.3 L5.0 4.5 L9.5 0.3" fill="none" stroke="#333" stroke-width="1.2"/></svg>
<div class="t" style="left:924px;top:858.0px;font-size:14px;transform-origin:0 50%;transform:translateY(-50%) scaleX(0.8296);color:#000;">LINEFORMAT</div>
<div class="combo" style="left:1036px;top:847px;width:710px;height:22px;"></div>
<div class="t" style="left:1040px;top:858.0px;font-size:14px;transform-origin:0 50%;transform:translateY(-50%) scaleX(0.9487);color:#000;">&lt;Vorgabe&gt;</div>
<svg style="left:1729.0px;top:856.0px" width="10" height="5" viewBox="0 0 10 5"><path d="M0.5 0.3 L5.0 4.5 L9.5 0.3" fill="none" stroke="#333" stroke-width="1.2"/></svg>
<div class="t" style="left:924px;top:887.0px;font-size:14px;transform-origin:0 50%;transform:translateY(-50%) scaleX(0.8450);color:#000;">SEPARATOR</div>
<div class="combo" style="left:1036px;top:876px;width:710px;height:22px;"></div>
<div class="t" style="left:1040px;top:887.0px;font-size:14px;transform-origin:0 50%;transform:translateY(-50%) scaleX(0.8386);color:#000;">COMMA</div>
<svg style="left:1729.0px;top:885.0px" width="10" height="5" viewBox="0 0 10 5"><path d="M0.5 0.3 L5.0 4.5 L9.5 0.3" fill="none" stroke="#333" stroke-width="1.2"/></svg>
<div class="t" style="left:924px;top:916.0px;font-size:14px;transform-origin:0 50%;transform:translateY(-50%) scaleX(0.8332);color:#000;">STRING_QUOTING</div>
<div class="combo" style="left:1036px;top:905px;width:710px;height:22px;"></div>
<div class="t" style="left:1040px;top:916.0px;font-size:14px;transform-origin:0 50%;transform:translateY(-50%) scaleX(0.8318);color:#000;">IF_AMBIGUOUS</div>
<svg style="left:1729.0px;top:914.0px" width="10" height="5" viewBox="0 0 10 5"><path d="M0.5 0.3 L5.0 4.5 L9.5 0.3" fill="none" stroke="#333" stroke-width="1.2"/></svg>
<div class="t" style="left:924px;top:945.0px;font-size:14px;transform-origin:0 50%;transform:translateY(-50%) scaleX(0.8610);color:#000;">WRITE_BOM</div>
<div class="combo" style="left:1036px;top:934px;width:710px;height:22px;"></div>
<svg style="left:1729.0px;top:943.0px" width="10" height="5" viewBox="0 0 10 5"><path d="M0.5 0.3 L5.0 4.5 L9.5 0.3" fill="none" stroke="#333" stroke-width="1.2"/></svg>
<div class="cb" style="left:1214px;top:991px;width:16px;height:16px;"></div>
<div class="t" style="left:1236px;top:999.0px;font-size:14px;transform-origin:0 50%;transform:translateY(-50%) scaleX(0.9053);color:#000;">Gespeicherte Datei zur Karte hinzufügen</div>
<div class="btn" style="left:1499px;top:986px;width:91px;height:26px;border:2px solid #0078d7"></div>
<div class="t" style="left:1544.5px;top:999.0px;font-size:14px;transform-origin:50% 50%;transform:translate(-50%,-50%) scaleX(0.9150);color:#000;">OK</div>
<div class="btn" style="left:1599px;top:986px;width:91px;height:26px;"></div>
<div class="t" style="left:1644.5px;top:999.0px;font-size:14px;transform-origin:50% 50%;transform:translate(-50%,-50%) scaleX(0.9150);color:#000;">Abbrechen</div>
<div class="btn" style="left:1699px;top:986px;width:91px;height:26px;"></div>
<div class="t" style="left:1744.5px;top:999.0px;font-size:14px;transform-origin:50% 50%;transform:translate(-50%,-50%) scaleX(0.9150);color:#000;">Hilfe</div>
<div class="a" style="left:952px;top:938px;width:134px;height:44px;background:#ffff80;border:1.300px solid #222;border-radius:9px"></div>
<div class="t" style="left:1019px;top:959.8px;font-size:17px;transform-origin:50% 50%;transform:translate(-50%,-50%) scaleX(0.9419);font-weight:bold;">Bild 29</div>
<svg style="left:1189.8px;top:967.5px" width="60" height="60" viewBox="0 0 60 60"><circle cx="30" cy="30" r="25.900" fill="none" stroke="#e0181c" stroke-width="2.900"/></svg>
<svg style="left:1562px;top:1015px" width="14" height="18" viewBox="0 0 14 18"><path d="M1 1L1 15L4.500 11.800L7.200 17.500L9.500 16.500L6.800 11L11.500 10.800Z" fill="#9b16c8" stroke="#5a0a7a" stroke-width="0.800"/></svg>
</body></html>
